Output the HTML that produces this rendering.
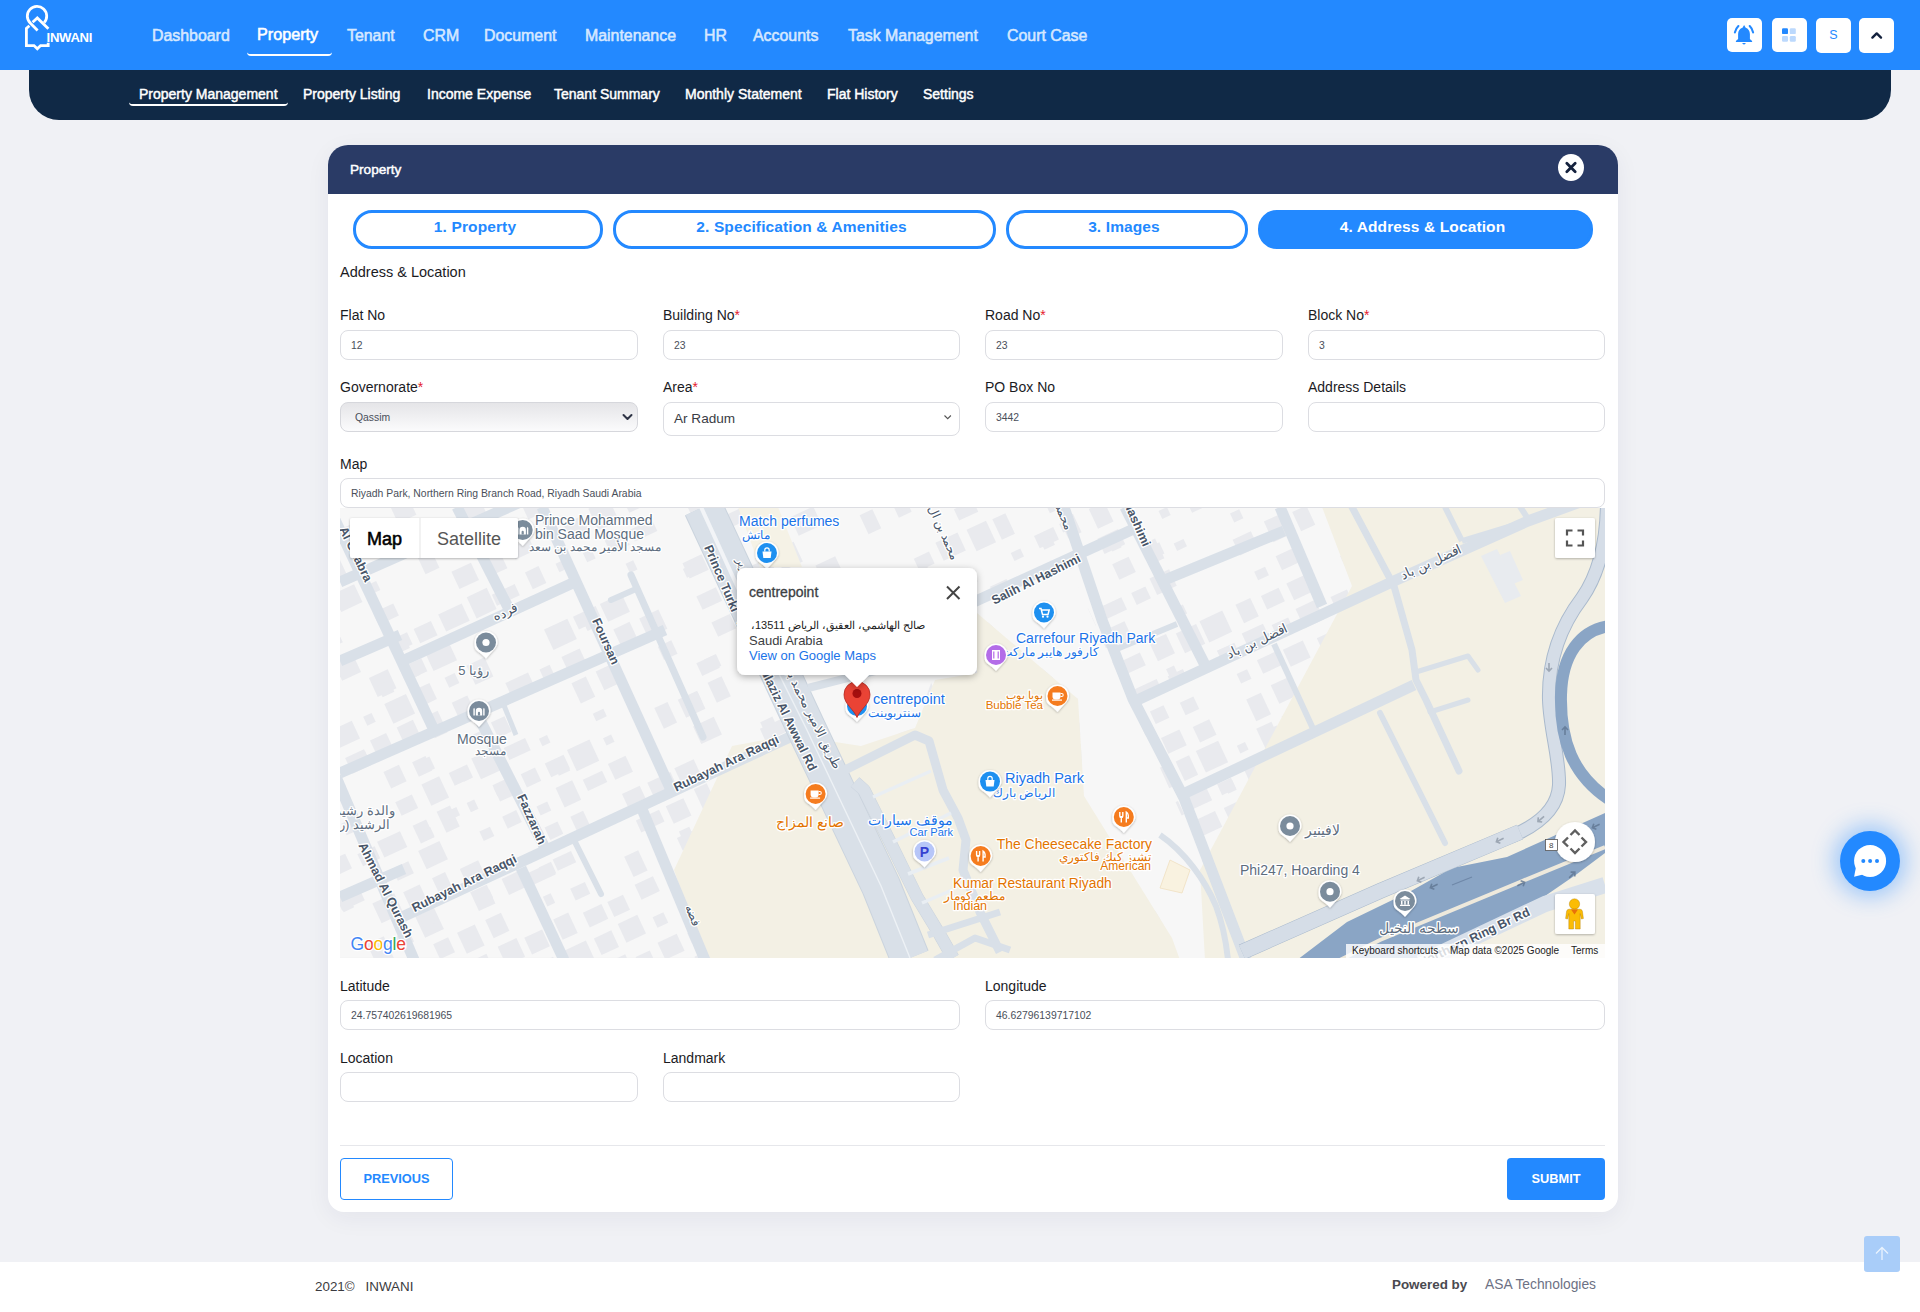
<!DOCTYPE html>
<html><head><meta charset="utf-8">
<style>
*{box-sizing:border-box;margin:0;padding:0}
html,body{width:1920px;height:1312px;overflow:hidden;background:#f0f1f5;font-family:"Liberation Sans",sans-serif;position:relative}
.abs{position:absolute}
#top{left:0;top:0;width:1920px;height:70px;background:#2389ff}
.nav{position:absolute;top:25.5px;font-size:15.9px;color:#d6e8ff;white-space:nowrap;line-height:19px;-webkit-text-stroke:0.55px #d6e8ff}
.nav.act{color:#fff;top:24.5px;font-size:16.2px;-webkit-text-stroke:0.55px #fff}
#sub{left:29px;top:70px;width:1862px;height:50px;background:#102946;border-radius:0 0 30px 30px}
.sn{position:absolute;top:85.5px;font-size:14px;color:#fff;white-space:nowrap;line-height:17px;-webkit-text-stroke:0.45px #fff}
.hbtn{position:absolute;background:#fff;border-radius:5px}
#modal{left:328px;top:145px;width:1290px;height:1067px;background:#fff;border-radius:20px 20px 16px 16px;box-shadow:0 6px 24px rgba(30,40,80,0.06)}
#mhead{left:328px;top:145px;width:1290px;height:49px;background:#2a3b66;border-radius:20px 20px 0 0}
.tab{position:absolute;top:210px;height:38.5px;border:3px solid #2389ff;border-radius:19px;color:#2389ff;font-size:15.5px;font-weight:bold;letter-spacing:0.12px;text-align:center;line-height:27px;padding-right:6px}
.tab.on{background:#2389ff;color:#fff}
.lbl{position:absolute;font-size:14px;color:#1b1b1f;white-space:nowrap;line-height:16px}
.req{color:#e5202e}
.inp{position:absolute;height:30px;border:1px solid #dcdde2;border-radius:8px;background:#fff;font-size:10.4px;color:#4a4f5a;padding-left:10px;line-height:30px;white-space:nowrap}
</style></head><body>
<div id="top" class="abs"></div>
<!-- logo -->
<svg class="abs" style="left:0;top:0" width="100" height="56" viewBox="0 0 100 56">
  <g fill="none" stroke="#fff" stroke-width="2.8" stroke-linecap="butt">
    <path d="M44.2 22.6 A9.7 9.7 0 1 0 30.2 23 L37.6 30.4"/>
    <path d="M32.6 22.2 L37.3 17.9 L48.4 28.8"/>
    <path d="M29.4 25.8 L26.4 28.4 L26.4 45.6 L34 45.6 L37.3 48.8 L40.6 45.6 L48.2 45.6 L48.2 42.8"/>
  </g>
  <text x="46.6" y="41.6" fill="#fff" font-family="Liberation Sans" font-weight="bold" font-size="13.1" letter-spacing="-0.3">INWANI</text>
</svg>
<div class="nav" style="left:152px">Dashboard</div>
<div class="nav act" style="left:257px">Property</div>
<div class="abs" style="left:247px;top:52px;width:85px;height:4px;border-bottom:2.4px solid #fff;border-radius:0 0 4px 4px"></div>
<div class="nav" style="left:347px">Tenant</div>
<div class="nav" style="left:423px">CRM</div>
<div class="nav" style="left:484px">Document</div>
<div class="nav" style="left:585px">Maintenance</div>
<div class="nav" style="left:704px">HR</div>
<div class="nav" style="left:753px">Accounts</div>
<div class="nav" style="left:848px">Task Management</div>
<div class="nav" style="left:1007px">Court Case</div>

<div class="hbtn" style="left:1727px;top:18px;width:35px;height:34px">
  <svg width="35" height="34" viewBox="0 0 35 34" style="position:absolute;left:0;top:0">
    <path d="M17.1 7 L15.5 9.8 C13 10.6 11.1 12.8 11.1 16 V21 L8.9 23 V24.1 H25.1 V23 L22.9 21 V16 C22.9 12.8 21 10.6 18.7 9.8 Z" fill="#2389ff"/>
    <path d="M14.9 24.9 H19.1 L17 26.8 Z" fill="#2389ff"/>
    <path d="M11.4 8 Q8.7 10.6 7.9 14.4M22.7 8 Q25.4 10.6 26.1 14.4" stroke="#2389ff" stroke-width="2.1" fill="none" stroke-linecap="round"/>
  </svg></div>
<div class="hbtn" style="left:1772px;top:18px;width:35px;height:34px">
  <svg width="35" height="34" viewBox="0 0 35 34" style="position:absolute;left:0;top:0">
    <rect x="10" y="10.3" width="6" height="5.8" rx="1.2" fill="#2389ff"/>
    <rect x="17.8" y="10.3" width="6" height="5.8" rx="1.2" fill="#bcd9fd"/>
    <rect x="10" y="18" width="6" height="5.8" rx="1.2" fill="#bcd9fd"/>
    <rect x="17.8" y="18" width="6" height="5.8" rx="1.2" fill="#bcd9fd"/>
  </svg></div>
<div class="hbtn" style="left:1816px;top:18px;width:35px;height:35px;color:#2389ff;font-size:12.5px;text-align:center;line-height:34px">S</div>
<div class="hbtn" style="left:1859px;top:18px;width:35px;height:35px">
  <svg width="35" height="35" viewBox="0 0 35 35" style="position:absolute;left:0;top:0">
    <path d="M13.4 19.6l4.3-4.2 4.3 4.2" stroke="#14213d" stroke-width="2.4" fill="none" stroke-linecap="round" stroke-linejoin="round"/>
  </svg></div>
<div id="sub" class="abs"></div>
<div class="sn" style="left:139px">Property Management</div>
<div class="abs" style="left:129px;top:102px;width:159px;height:4px;border-bottom:2.4px solid #fff;border-radius:0 0 4px 4px"></div>
<div class="sn" style="left:303px">Property Listing</div>
<div class="sn" style="left:427px">Income Expense</div>
<div class="sn" style="left:554px">Tenant Summary</div>
<div class="sn" style="left:685px">Monthly Statement</div>
<div class="sn" style="left:827px">Flat History</div>
<div class="sn" style="left:923px">Settings</div>

<div id="modal" class="abs"></div>
<div id="mhead" class="abs"></div>
<div class="abs" style="left:350px;top:162px;font-size:13.6px;color:#fff;line-height:16px;-webkit-text-stroke:0.45px #fff">Property</div>
<div class="abs" style="left:1558px;top:154px;width:26px;height:27px;border-radius:50%;background:#fff">
  <svg width="26" height="27" viewBox="0 0 26 27" style="position:absolute;left:0;top:0"><path d="M8.8 9.3l8.4 8.4M17.2 9.3l-8.4 8.4" stroke="#14213d" stroke-width="2.8" stroke-linecap="round"/></svg></div>

<div class="tab" style="left:353px;width:250px">1. Property</div>
<div class="tab" style="left:613px;width:383px">2. Specification &amp; Amenities</div>
<div class="tab" style="left:1006px;width:242px">3. Images</div>
<div class="tab on" style="left:1258px;width:335px">4. Address &amp; Location</div>

<div class="lbl" style="left:340px;top:264px;font-size:14.5px">Address &amp; Location</div>

<div class="lbl" style="left:340px;top:307px">Flat No</div>
<div class="lbl" style="left:663px;top:307px">Building No<span class="req">*</span></div>
<div class="lbl" style="left:985px;top:307px">Road No<span class="req">*</span></div>
<div class="lbl" style="left:1308px;top:307px">Block No<span class="req">*</span></div>
<div class="inp" style="left:340px;top:330px;width:298px">12</div>
<div class="inp" style="left:663px;top:330px;width:297px">23</div>
<div class="inp" style="left:985px;top:330px;width:298px">23</div>
<div class="inp" style="left:1308px;top:330px;width:297px">3</div>

<div class="lbl" style="left:340px;top:379px">Governorate<span class="req">*</span></div>
<div class="lbl" style="left:663px;top:379px">Area<span class="req">*</span></div>
<div class="lbl" style="left:985px;top:379px">PO Box No</div>
<div class="lbl" style="left:1308px;top:379px">Address Details</div>

<div class="abs" style="left:340px;top:402px;width:298px;height:30px;border:1px solid #d6d7dc;border-radius:8px;background:linear-gradient(#e5e5e8,#fbfbfc)"></div>
<div class="abs" style="left:355px;top:411px;font-size:10.4px;color:#4a4f5a;line-height:14px">Qassim</div>
<svg class="abs" style="left:620px;top:411px" width="15" height="12" viewBox="0 0 15 12"><path d="M3.5 4l4 4 4-4" stroke="#2e3445" stroke-width="2" fill="none" stroke-linecap="round" stroke-linejoin="round"/></svg>
<div class="abs" style="left:663px;top:402px;width:297px;height:34px;border:1px solid #dcdde2;border-radius:8px;background:#fff"></div>
<div class="abs" style="left:674px;top:410px;font-size:13.6px;color:#3a3d45;line-height:17px">Ar Radum</div>
<svg class="abs" style="left:941px;top:412px" width="14" height="10" viewBox="0 0 14 10"><path d="M3.5 3.5l3.2 3.2 3.2-3.2" stroke="#555" stroke-width="1.1" fill="none"/></svg>
<div class="inp" style="left:985px;top:402px;width:298px">3442</div>
<div class="inp" style="left:1308px;top:402px;width:297px"></div>

<div class="lbl" style="left:340px;top:456px">Map</div>
<div class="inp" style="left:340px;top:478px;width:1265px">Riyadh Park, Northern Ring Branch Road, Riyadh Saudi Arabia</div>

<div id="map" class="abs" style="left:340px;top:508px;width:1265px;height:450px;background:#f5f5f5;overflow:hidden">
<!--MAPSVG-->
<svg width="1265" height="450" viewBox="340 508 1265 450" style="position:absolute;left:0;top:0"><rect x="340" y="507" width="1265" height="450" fill="#f7f7f7"/>
<rect x="315.66821144470305" y="968.6444706312878" width="19.582694113871675" height="15.886015436929291" fill="#e9eaee" transform="rotate(-25 325.45955850163887 976.5874783497525)"/>
<rect x="325.44827455617826" y="975.8605736487144" width="9.446377699746725" height="9.528933070251867" fill="#e9eaee" transform="rotate(-25 330.1714634060516 980.6250401838404)"/>
<rect x="331.1862855270919" y="856.7850187638451" width="18.23947774603983" height="16.19103244430083" fill="#e9eaee" transform="rotate(-25 340.3060244001118 864.8805349859955)"/>
<rect x="337.6474101018988" y="890.2898781215542" width="24.902850513241695" height="15.951057834859629" fill="#e9eaee" transform="rotate(-25 350.09883535851964 898.2654070389841)"/>
<rect x="340.44051613816833" y="897.3768855293549" width="11.536769204482594" height="12.95365921525903" fill="#e9eaee" transform="rotate(-25 346.2089007404096 903.8537151369844)"/>
<rect x="371.19091367991" y="938.9458654956003" width="18.47888736865056" height="23.98499012670943" fill="#e9eaee" transform="rotate(-25 380.4303573642353 950.938360558955)"/>
<rect x="378.55323354798907" y="966.898292217886" width="25.354344505071147" height="15.165470990201182" fill="#e9eaee" transform="rotate(-25 391.23040580052464 974.4810277129866)"/>
<rect x="316.00434959514627" y="761.4820573300875" width="23.970587626133767" height="20.07645792194251" fill="#e9eaee" transform="rotate(-25 327.98964340821317 771.5202862910588)"/>
<rect x="343.03048801619855" y="819.2572891887518" width="18.186690808954886" height="12.8113277051634" fill="#e9eaee" transform="rotate(-25 352.12383342067596 825.6629530413335)"/>
<rect x="359.32993898137505" y="849.56504790621" width="19.0100312402991" height="13.339101057261292" fill="#e9eaee" transform="rotate(-25 368.8349546015246 856.2345984348407)"/>
<rect x="375.8528026112777" y="897.2632532590922" width="24.108455288234794" height="21.95052969118222" fill="#e9eaee" transform="rotate(-25 387.9070302553951 908.2385181046833)"/>
<rect x="394.393770213885" y="933.7151343220594" width="17.899311924661824" height="12.022829236540947" fill="#e9eaee" transform="rotate(-25 403.34342617621587 939.7265489403298)"/>
<rect x="334.3549047918573" y="724.509696172478" width="22.602231067508974" height="19.657884471981216" fill="#e9eaee" transform="rotate(-25 345.6560203256118 734.3386384084686)"/>
<rect x="347.8068092695079" y="752.8818573386969" width="20.821977829778902" height="17.274283460541355" fill="#e9eaee" transform="rotate(-25 358.21779818439734 761.5189990689676)"/>
<rect x="355.46612440711624" y="752.7047982688293" width="12.258346024397284" height="10.93590918717808" fill="#e9eaee" transform="rotate(-25 361.5952974193149 758.1727528624184)"/>
<rect x="379.53736149467596" y="835.7026361655253" width="25.285260234153263" height="17.364679232016552" fill="#e9eaee" transform="rotate(-25 392.1799916117526 844.3849757815335)"/>
<rect x="394.2099801233407" y="864.4639347084875" width="17.699370470528375" height="13.262796207317413" fill="#e9eaee" transform="rotate(-25 403.0596653586049 871.0953328121462)"/>
<rect x="406.1355091363259" y="887.5477821579717" width="18.17771322828905" height="18.001030261254222" fill="#e9eaee" transform="rotate(-25 415.2243657504704 896.5482972885989)"/>
<rect x="419.1785980377112" y="910.9031532557191" width="20.71286902600891" height="23.64167326986891" fill="#e9eaee" transform="rotate(-25 429.53503255071564 922.7239898906536)"/>
<rect x="421.52866649236324" y="915.0773258526067" width="12.454923260753342" height="10.959318784098942" fill="#e9eaee" transform="rotate(-25 427.75612812273994 920.5569852446562)"/>
<rect x="435.8669503095476" y="939.9688594111286" width="16.473816475768018" height="16.42671125157556" fill="#e9eaee" transform="rotate(-25 444.10385854743157 948.1822150369164)"/>
<rect x="312.41817032669144" y="606.5234689969301" width="15.367017605980834" height="14.671218500595806" fill="#e9eaee" transform="rotate(-25 320.1016791296819 613.859078247228)"/>
<rect x="316.4127220651331" y="629.5124092938169" width="23.5562679212132" height="18.55789745440545" fill="#e9eaee" transform="rotate(-25 328.1908560257397 638.7913580210196)"/>
<rect x="336.4877225201713" y="655.1839442705638" width="20.785569350539344" height="22.26537690083881" fill="#e9eaee" transform="rotate(-25 346.880507195441 666.3166327209832)"/>
<rect x="364.81236281631345" y="714.3989850755173" width="9.285274999818215" height="9.893402219192662" fill="#e9eaee" transform="rotate(-25 369.45500031622254 719.3456861851137)"/>
<rect x="373.24540720473965" y="735.8768119018541" width="17.769317227638957" height="19.188455119587942" fill="#e9eaee" transform="rotate(-25 382.1300658185591 745.471039461648)"/>
<rect x="386.48220431980974" y="767.5375195349171" width="17.07183538056253" height="18.120603474596955" fill="#e9eaee" transform="rotate(-25 395.018122010091 776.5978212722156)"/>
<rect x="397.58016487071404" y="797.6196164565829" width="18.26643621887032" height="15.043684971618717" fill="#e9eaee" transform="rotate(-25 406.7133829801492 805.1414589423922)"/>
<rect x="416.094359904447" y="821.7612635304362" width="14.854370616667753" height="19.57917305431276" fill="#e9eaee" transform="rotate(-25 423.5215452127809 831.5508500575926)"/>
<rect x="422.78633889749284" y="828.3752774447787" width="10.021502194570566" height="10.648569655262573" fill="#e9eaee" transform="rotate(-25 427.7970899947781 833.6995622724099)"/>
<rect x="421.3148086455263" y="844.981020249425" width="23.44188848935202" height="20.168594014057042" fill="#e9eaee" transform="rotate(-25 433.0357528902023 855.0653172564536)"/>
<rect x="435.51769596439993" y="874.1942137542416" width="14.377471861472902" height="19.679396299699572" fill="#e9eaee" transform="rotate(-25 442.7064318951364 884.0339119040914)"/>
<rect x="461.0279496644569" y="927.4981507125095" width="19.571390872020768" height="23.241671915035703" fill="#e9eaee" transform="rotate(-25 470.8136451004673 939.1189866700274)"/>
<rect x="469.7973781158097" y="957.5452851534284" width="21.482677312445006" height="18.110648323357363" fill="#e9eaee" transform="rotate(-25 480.5387167720322 966.600609315107)"/>
<rect x="323.16855511791044" y="562.6700978474325" width="21.30204165307167" height="18.322888146705264" fill="#e9eaee" transform="rotate(-25 333.8195759444463 571.8315419207852)"/>
<rect x="336.0224418667686" y="588.1641374876945" width="23.34390010447362" height="19.771922146855392" fill="#e9eaee" transform="rotate(-25 347.6943919190054 598.0500985611221)"/>
<rect x="372.33801332497467" y="672.6384279490176" width="20.733977602170064" height="20.86528958544998" fill="#e9eaee" transform="rotate(-25 382.7050021260597 683.0710727417426)"/>
<rect x="379.3440601393976" y="682.3227191414795" width="12.956312235929357" height="12.743578738058138" fill="#e9eaee" transform="rotate(-25 385.82221625736224 688.6945085105086)"/>
<rect x="387.7350539802284" y="697.9582262125659" width="23.892613310113124" height="21.676032540381108" fill="#e9eaee" transform="rotate(-25 399.68136063528493 708.7962424827565)"/>
<rect x="400.5280597017041" y="722.6113796717981" width="17.9051497412965" height="22.30605740035629" fill="#e9eaee" transform="rotate(-25 409.48063457235236 733.7644083719763)"/>
<rect x="414.8004878467446" y="758.3807859340884" width="14.73994202580707" height="15.932732617434937" fill="#e9eaee" transform="rotate(-25 422.17045885964814 766.3471522428059)"/>
<rect x="422.4056553234631" y="758.0866383016178" width="10.329517053009774" height="13.129436093680987" fill="#e9eaee" transform="rotate(-25 427.570413849968 764.6513563484583)"/>
<rect x="425.48368694064465" y="779.202944623108" width="19.52198912075044" height="23.485882003868717" fill="#e9eaee" transform="rotate(-25 435.24468150101984 790.9458856250424)"/>
<rect x="431.12634922428776" y="786.2496936987925" width="8.846669638418046" height="8.877857306431745" fill="#e9eaee" transform="rotate(-25 435.54968404349677 790.6886223520083)"/>
<rect x="440.85272786991476" y="807.5062782649101" width="14.708931124916502" height="23.22022800794068" fill="#e9eaee" transform="rotate(-25 448.207193432373 819.1163922688804)"/>
<rect x="446.869915221294" y="809.2204126048753" width="11.898157472159049" height="8.876368739666624" fill="#e9eaee" transform="rotate(-25 452.8189939573735 813.6585969747085)"/>
<rect x="462.08642877610185" y="863.9233536863015" width="20.24900563241823" height="15.368630384912008" fill="#e9eaee" transform="rotate(-25 472.21093159231094 871.6076688787575)"/>
<rect x="473.7258953268948" y="887.53566334535" width="18.215767669084507" height="20.656417549902255" fill="#e9eaee" transform="rotate(-25 482.833779161437 897.8638721203012)"/>
<rect x="478.1713383630942" y="891.3356569684406" width="13.563487422682183" height="9.800740178759012" fill="#e9eaee" transform="rotate(-25 484.9530820744353 896.2360270578201)"/>
<rect x="488.6145288748249" y="915.4256237806105" width="17.37120949289381" height="20.035712822544454" fill="#e9eaee" transform="rotate(-25 497.3001336212718 925.4434801918827)"/>
<rect x="501.0668754962648" y="941.4827437461629" width="20.684863122168245" height="20.6221185579269" fill="#e9eaee" transform="rotate(-25 511.40930705734894 951.7938030251263)"/>
<rect x="341.8997529444649" y="526.0817853200842" width="14.160712442463346" height="17.57664250778318" fill="#e9eaee" transform="rotate(-25 348.9801091656966 534.8701065739758)"/>
<rect x="346.44014606008204" y="525.2528336617515" width="13.292770486620565" height="9.350159828023862" fill="#e9eaee" transform="rotate(-25 353.08653130339235 529.9279135757635)"/>
<rect x="367.03381731352476" y="583.0519950634971" width="11.794307015349833" height="10.030239227731998" fill="#e9eaee" transform="rotate(-25 372.9309708211997 588.0671146773631)"/>
<rect x="374.83203470735515" y="607.52976910429" width="22.280061010582017" height="13.338346908648225" fill="#e9eaee" transform="rotate(-25 385.97206521264616 614.1989425586141)"/>
<rect x="392.403597327303" y="635.4424711238471" width="18.241285864039824" height="13.171858782497853" fill="#e9eaee" transform="rotate(-25 401.5242402593229 642.028400515096)"/>
<rect x="395.3967766521906" y="642.0395779225412" width="13.196648609670195" height="9.100133211726641" fill="#e9eaee" transform="rotate(-25 401.9951009570257 646.5896445284045)"/>
<rect x="401.19418420539677" y="662.8025930102907" width="24.29948810958696" height="14.24050249518769" fill="#e9eaee" transform="rotate(-25 413.34392826019024 669.9228442578845)"/>
<rect x="408.16788350928323" y="667.737027786707" width="10.692850921225688" height="9.81295298765143" fill="#e9eaee" transform="rotate(-25 413.5143089698961 672.6435042805327)"/>
<rect x="417.26814424233356" y="685.6572674909767" width="16.683438528509402" height="17.79623333529619" fill="#e9eaee" transform="rotate(-25 425.6098635065883 694.5553841586247)"/>
<rect x="429.155180339519" y="712.7212561587581" width="14.14240654235236" height="23.548068286340673" fill="#e9eaee" transform="rotate(-25 436.22638361069517 724.4952903019284)"/>
<rect x="432.1555168819453" y="725.8098508621885" width="9.240229171375153" height="8.383615706494735" fill="#e9eaee" transform="rotate(-25 436.7756314676329 730.0016587154358)"/>
<rect x="450.7899549338128" y="768.060995462052" width="20.133155792117144" height="14.092098235855781" fill="#e9eaee" transform="rotate(-25 460.85653282987136 775.1070445799799)"/>
<rect x="461.0121331055314" y="768.649044571015" width="9.399294264695143" height="11.585481931742436" fill="#e9eaee" transform="rotate(-25 465.711780237879 774.4417855368862)"/>
<rect x="468.3701939847643" y="800.8239721285169" width="8.354884350426362" height="10.194126023213615" fill="#e9eaee" transform="rotate(-25 472.54763615997746 805.9210351401236)"/>
<rect x="481.0466091803591" y="828.619221164867" width="11.637892090601992" height="10.428900764237902" fill="#e9eaee" transform="rotate(-25 486.8655552256601 833.8336715469859)"/>
<rect x="504.5196642613583" y="874.42813513658" width="17.394209353218077" height="17.608771720329404" fill="#e9eaee" transform="rotate(-25 513.2167689379673 883.2325209967447)"/>
<rect x="527.2419811779373" y="932.8030615958784" width="19.690942472979824" height="18.36603781953602" fill="#e9eaee" transform="rotate(-25 537.0874524144272 941.9860805056464)"/>
<rect x="540.8503811714951" y="959.5514113332019" width="17.756609117616804" height="22.19069120786987" fill="#e9eaee" transform="rotate(-25 549.7286857303035 970.6467569371368)"/>
<rect x="349.07391561395104" y="482.0733780421394" width="22.87867389069793" height="18.75708945190241" fill="#e9eaee" transform="rotate(-25 360.5132525593 491.4519227680906)"/>
<rect x="353.3589466640087" y="487.01802199911765" width="8.08653076992373" height="8.268676345792755" fill="#e9eaee" transform="rotate(-25 357.40221204897057 491.152360172014)"/>
<rect x="416.03931272981106" y="624.208168322562" width="19.058053957211484" height="15.787866977332188" fill="#e9eaee" transform="rotate(-25 425.5683397084168 632.1021018112281)"/>
<rect x="428.01627891879355" y="645.9281747740245" width="25.883712285088222" height="20.673092507333802" fill="#e9eaee" transform="rotate(-25 440.95813506133766 656.2647210276914)"/>
<rect x="446.41156186950786" y="674.8198378514077" width="11.143458835038958" height="11.106326799284684" fill="#e9eaee" transform="rotate(-25 451.9832912870273 680.37300125105)"/>
<rect x="454.9749167179981" y="698.1193885267135" width="17.2253160690534" height="19.295551653886253" fill="#e9eaee" transform="rotate(-25 463.5875747525248 707.7671643536565)"/>
<rect x="470.51029743769084" y="733.5273402118968" width="11.561311884055897" height="9.128586002666864" fill="#e9eaee" transform="rotate(-25 476.2909533797188 738.0916332132302)"/>
<rect x="474.99257488309485" y="752.3005683493661" width="24.19242751847344" height="23.034384659593147" fill="#e9eaee" transform="rotate(-25 487.08878864233156 763.8177606791627)"/>
<rect x="478.8200858863883" y="761.7328023735195" width="13.183766269791906" height="13.870446279044918" fill="#e9eaee" transform="rotate(-25 485.4119690212843 768.6680255130419)"/>
<rect x="495.4745191596295" y="780.8212318437419" width="16.99577804359092" height="18.028906791286463" fill="#e9eaee" transform="rotate(-25 503.97240818142495 789.8356852393852)"/>
<rect x="494.97088095245545" y="785.0469615493481" width="12.090129662860374" height="8.92756343586576" fill="#e9eaee" transform="rotate(-25 501.0159457838856 789.510743267281)"/>
<rect x="504.25748900329694" y="812.7549202609166" width="15.466873171831486" height="13.237838465397008" fill="#e9eaee" transform="rotate(-25 511.9909255892127 819.3738394936152)"/>
<rect x="530.1581724201525" y="867.1808069862655" width="23.840545690151323" height="12.977042687389595" fill="#e9eaee" transform="rotate(-25 542.0784452652282 873.6693283299602)"/>
<rect x="540.7888655678456" y="864.0627795543038" width="13.491640648717478" height="12.524878145884106" fill="#e9eaee" transform="rotate(-25 547.5346858922044 870.3252186272458)"/>
<rect x="544.721485052386" y="894.5204776288316" width="8.584017984589348" height="10.664285340771924" fill="#e9eaee" transform="rotate(-25 549.0134940446807 899.8526202992175)"/>
<rect x="557.1694705928014" y="914.9729888491659" width="16.543606256229914" height="22.455482482061953" fill="#e9eaee" transform="rotate(-25 565.4412737209163 926.2007300901969)"/>
<rect x="566.8938147047018" y="944.7878551892403" width="24.633174951659186" height="21.352195320151502" fill="#e9eaee" transform="rotate(-25 579.2104021805313 955.463952849316)"/>
<rect x="392.74046509826354" y="499.10423057789194" width="20.189221550514425" height="20.933396109802914" fill="#e9eaee" transform="rotate(-25 402.83507587352074 509.5709286327934)"/>
<rect x="420.8568244049171" y="553.0929627105099" width="15.357074740264112" height="18.844745562919684" fill="#e9eaee" transform="rotate(-25 428.5353617750492 562.5153354919698)"/>
<rect x="440.9526990563157" y="608.0521115560401" width="25.955194516016327" height="18.969014487137308" fill="#e9eaee" transform="rotate(-25 453.93029631432387 617.5366187996087)"/>
<rect x="469.99892437638766" y="660.4405289317224" width="19.8421570956258" height="21.2169414732694" fill="#e9eaee" transform="rotate(-25 479.92000292420056 671.048999668357)"/>
<rect x="493.8497442478798" y="718.495896400604" width="14.889210606990666" height="17.027194862628306" fill="#e9eaee" transform="rotate(-25 501.29434955137515 727.0094938319181)"/>
<rect x="505.45617157052396" y="742.3522629484804" width="23.543510577725925" height="13.402135995241832" fill="#e9eaee" transform="rotate(-25 517.2279268593869 749.0533309461014)"/>
<rect x="523.0955796423386" y="770.1869300694462" width="15.745054141618292" height="14.634827244875686" fill="#e9eaee" transform="rotate(-25 530.9681067131478 777.5043436918841)"/>
<rect x="537.9872080124206" y="803.6593950648063" width="11.812653046297168" height="9.707417748441244" fill="#e9eaee" transform="rotate(-25 543.8935345355692 808.5131039390269)"/>
<rect x="546.7905186775351" y="823.9414152770598" width="14.27359284004703" height="13.586060637233079" fill="#e9eaee" transform="rotate(-25 553.9273150975587 830.7344455956763)"/>
<rect x="554.2605665560413" y="854.7469307897576" width="20.303583345386013" height="12.365602569580792" fill="#e9eaee" transform="rotate(-25 564.4123582287343 860.9297320745479)"/>
<rect x="562.2554473889414" y="854.3513482737858" width="8.553396027348702" height="10.87149924250999" fill="#e9eaee" transform="rotate(-25 566.5321454026158 859.7870978950408)"/>
<rect x="572.1871796957341" y="884.8221197452101" width="16.162461287833843" height="12.896410845763446" fill="#e9eaee" transform="rotate(-25 580.268410339651 891.2703251680919)"/>
<rect x="585.344742716758" y="907.6139503353326" width="20.474962936239503" height="16.295422101015014" fill="#e9eaee" transform="rotate(-25 595.5822241848778 915.7616613858401)"/>
<rect x="596.8223658074921" y="933.4901670343951" width="19.23981827194428" height="18.32006492189017" fill="#e9eaee" transform="rotate(-25 606.4422749434643 942.6501994953402)"/>
<rect x="604.1194336508761" y="959.0113683776566" width="25.842373738186787" height="16.789776726217763" fill="#e9eaee" transform="rotate(-25 617.0406205199695 967.4062567407655)"/>
<rect x="424.3231822781055" y="492.2612162981582" width="8.5217255083919" height="9.142587844551825" fill="#e9eaee" transform="rotate(-25 428.58404503230145 496.83251022043413)"/>
<rect x="454.4333839744067" y="566.3082691134701" width="21.53830100294873" height="19.139793450730636" fill="#e9eaee" transform="rotate(-25 465.20253447588107 575.8781658388355)"/>
<rect x="470.65253354602925" y="591.4308996187536" width="22.023056949368737" height="23.389855921687623" fill="#e9eaee" transform="rotate(-25 481.66406202071363 603.1258275795974)"/>
<rect x="475.2565502406101" y="593.5061065122128" width="12.48274866539482" height="10.588960544354522" fill="#e9eaee" transform="rotate(-25 481.49792457330756 598.80058678439)"/>
<rect x="506.84269544767005" y="677.1950561284084" width="25.058260709770167" height="12.764355230702682" fill="#e9eaee" transform="rotate(-25 519.3718258025551 683.5772337437597)"/>
<rect x="540.2536759854531" y="736.5129334110696" width="8.889627908221382" height="8.3152414430979" fill="#e9eaee" transform="rotate(-25 544.6984899395638 740.6705541326186)"/>
<rect x="547.0145449878222" y="758.3247341445413" width="20.708684782305408" height="15.179551403276168" fill="#e9eaee" transform="rotate(-25 557.3688873789749 765.9145098461794)"/>
<rect x="555.6382678294609" y="760.8830879421166" width="12.489086572269624" height="12.901610086099872" fill="#e9eaee" transform="rotate(-25 561.8828111155957 767.3338929851666)"/>
<rect x="559.2365280728837" y="783.2083312125768" width="18.28928256059191" height="21.34303567365879" fill="#e9eaee" transform="rotate(-25 568.3811693531796 793.8798490494062)"/>
<rect x="573.9176559338555" y="812.7236373658585" width="14.094491378135778" height="20.222237015559056" fill="#e9eaee" transform="rotate(-25 580.9649016229233 822.8347558736381)"/>
<rect x="610.005630267253" y="897.6263515928981" width="17.291241555018456" height="16.532629846682294" fill="#e9eaee" transform="rotate(-25 618.6512510447621 905.8926665162393)"/>
<rect x="621.0829657705202" y="918.4374114762513" width="21.570575674640004" height="20.61103131596886" fill="#e9eaee" transform="rotate(-25 631.8682536078402 928.7429271342357)"/>
<rect x="637.4890335978519" y="953.2173605755472" width="15.551161701459993" height="12.219849072385923" fill="#e9eaee" transform="rotate(-25 645.2646144485818 959.3272851117401)"/>
<rect x="459.1178828051953" y="496.1467100062111" width="23.6261306557966" height="23.6503335857406" fill="#e9eaee" transform="rotate(-25 470.9309481330936 507.9718767990814)"/>
<rect x="490.1132098697075" y="553.6527022195331" width="14.084172488071495" height="18.322550682132935" fill="#e9eaee" transform="rotate(-25 497.15529611374325 562.8139775605996)"/>
<rect x="493.22982956886335" y="588.8351352179448" width="25.183799799375652" height="12.188769999709084" fill="#e9eaee" transform="rotate(-25 505.82172946855115 594.9295202177993)"/>
<rect x="541.0801376360058" y="666.7767570235071" width="11.215532017479422" height="9.977555910160222" fill="#e9eaee" transform="rotate(-25 546.6879036447456 671.7655349785872)"/>
<rect x="570.7282694336246" y="743.7352226672299" width="24.7904368962573" height="23.282096810080432" fill="#e9eaee" transform="rotate(-25 583.1234878817532 755.3762710722701)"/>
<rect x="584.3870707713064" y="774.5957526898287" width="21.25600271557621" height="12.405131020154672" fill="#e9eaee" transform="rotate(-25 595.0150721290945 780.798318199906)"/>
<rect x="628.1977943719736" y="852.5659548622884" width="15.415059643512663" height="22.256735313956334" fill="#e9eaee" transform="rotate(-25 635.9053241937299 863.6943225192666)"/>
<rect x="637.152686615062" y="879.7815483262341" width="20.174033430941037" height="16.36841661819551" fill="#e9eaee" transform="rotate(-25 647.2397033305325 887.9657566353318)"/>
<rect x="654.4657772057184" y="914.1559455562351" width="11.905386826979289" height="11.633511271103188" fill="#e9eaee" transform="rotate(-25 660.418470619208 919.9727011917867)"/>
<rect x="660.4588993188825" y="937.355798538456" width="21.168587842343648" height="18.756701378538665" fill="#e9eaee" transform="rotate(-25 671.0431932400543 946.7341492277254)"/>
<rect x="672.4611721500517" y="964.1413668562777" width="23.388832763951033" height="17.923079751634482" fill="#e9eaee" transform="rotate(-25 684.1555885320272 973.102906732095)"/>
<rect x="511.93875337882884" y="542.9085326374214" width="21.172999447847054" height="12.590980318498588" fill="#e9eaee" transform="rotate(-25 522.5252531027523 549.2040227966708)"/>
<rect x="528.195918735702" y="568.3811500256787" width="14.92904522551918" height="18.652992625090775" fill="#e9eaee" transform="rotate(-25 535.6604413484615 577.7076463382241)"/>
<rect x="547.5168137412942" y="623.1071237057165" width="25.787339994467814" height="22.4714820930903" fill="#e9eaee" transform="rotate(-25 560.4104837385281 634.3428647522617)"/>
<rect x="555.4975018462001" y="628.9318808415998" width="10.702574932808943" height="12.907159504132832" fill="#e9eaee" transform="rotate(-25 560.8487893126045 635.3854605936662)"/>
<rect x="564.4078902489002" y="651.8209926692699" width="20.05821279157942" height="18.522039831029765" fill="#e9eaee" transform="rotate(-25 574.4369966446899 661.0820125847848)"/>
<rect x="575.3981501679573" y="678.8548523011401" width="15.907547720398107" height="22.259105723306686" fill="#e9eaee" transform="rotate(-25 583.3519240281563 689.9844051627935)"/>
<rect x="593.9573647639319" y="710.8317418456886" width="11.656580734022633" height="8.223601343515478" fill="#e9eaee" transform="rotate(-25 599.7856551309432 714.9435425174463)"/>
<rect x="604.3502516166454" y="735.9757647942438" width="8.877988867647389" height="8.1132147342046" fill="#e9eaee" transform="rotate(-25 608.7892460504692 740.0323721613461)"/>
<rect x="610.6918860318372" y="758.9914557445165" width="19.4641623503277" height="17.57477639672058" fill="#e9eaee" transform="rotate(-25 620.423967207001 767.7788439428768)"/>
<rect x="616.4885678579401" y="760.6508133549244" width="8.548542089245654" height="8.340148493857129" fill="#e9eaee" transform="rotate(-25 620.762838902563 764.820887601853)"/>
<rect x="623.9751385184054" y="789.1805426010476" width="19.562316042801694" height="13.96334374981988" fill="#e9eaee" transform="rotate(-25 633.7562965398063 796.1622144759575)"/>
<rect x="637.390409693192" y="814.589055688606" width="25.582208748518543" height="13.009314370775222" fill="#e9eaee" transform="rotate(-25 650.1815140674513 821.0937128739936)"/>
<rect x="679.5940590571149" y="894.3724447798827" width="20.141029520869466" height="22.18432189220306" fill="#e9eaee" transform="rotate(-25 689.6645738175497 905.4646057259843)"/>
<rect x="688.9360139186236" y="918.2586818869042" width="15.686789745569834" height="23.152338639138506" fill="#e9eaee" transform="rotate(-25 696.7794087914085 929.8348512064734)"/>
<rect x="688.9355957046592" y="930.2276768487094" width="12.145840633701686" height="10.603498720438752" fill="#e9eaee" transform="rotate(-25 695.0085160215101 935.5294262089287)"/>
<rect x="696.79886115954" y="950.6951419873577" width="25.382260007549856" height="17.04884602919101" fill="#e9eaee" transform="rotate(-25 709.4899911633149 959.2195650019532)"/>
<rect x="524.4828137092925" y="501.80952134614574" width="22.07094569395213" height="13.563907777523399" fill="#e9eaee" transform="rotate(-25 535.5182865562685 508.5914752349074)"/>
<rect x="557.0621796761296" y="561.4891021525777" width="8.473862588806526" height="9.342223497424772" fill="#e9eaee" transform="rotate(-25 561.2991109705329 566.1602139012901)"/>
<rect x="574.7784668280135" y="610.7258823338959" width="24.989187472121216" height="14.093927992456262" fill="#e9eaee" transform="rotate(-25 587.2730605640741 617.772846330124)"/>
<rect x="584.5866516936154" y="617.6423665303078" width="8.15193048273401" height="12.146971564899479" fill="#e9eaee" transform="rotate(-25 588.6626169349825 623.7158523127575)"/>
<rect x="598.9001295418966" y="665.6531464575636" width="23.064702264567032" height="20.573599529073547" fill="#e9eaee" transform="rotate(-25 610.4324806741802 675.9399462221004)"/>
<rect x="650.1079431061283" y="776.4291787377065" width="25.472427444890442" height="18.988152809696807" fill="#e9eaee" transform="rotate(-25 662.8441568285735 785.9232551425549)"/>
<rect x="668.8294320730733" y="801.3622412165965" width="19.498743176138724" height="19.04630392150316" fill="#e9eaee" transform="rotate(-25 678.5788036611427 810.8853931773481)"/>
<rect x="678.8838519289837" y="833.0272198661726" width="20.249859111730967" height="13.740799963087241" fill="#e9eaee" transform="rotate(-25 689.0087814848492 839.8976198477162)"/>
<rect x="680.7892412438529" y="828.6074106302308" width="11.418785758503358" height="11.72109698440537" fill="#e9eaee" transform="rotate(-25 686.4986341231046 834.4679591224335)"/>
<rect x="690.2185280373957" y="860.0766323188393" width="22.200124758650666" height="13.02407459678123" fill="#e9eaee" transform="rotate(-25 701.318590416721 866.5886696172299)"/>
<rect x="689.0232708238811" y="858.1007388449622" width="13.098991961417607" height="8.813079570589485" fill="#e9eaee" transform="rotate(-25 695.57276680459 862.5072786302569)"/>
<rect x="742.5687069245905" y="960.5165124787119" width="20.28274716775841" height="22.145038811223596" fill="#e9eaee" transform="rotate(-25 752.7100805084697 971.5890318843237)"/>
<rect x="751.62502071764" y="968.4130219110419" width="11.558111951202694" height="10.441902339782027" fill="#e9eaee" transform="rotate(-25 757.4040766932413 973.633973080933)"/>
<rect x="565.6579964962301" y="519.4538245193274" width="20.50784171629283" height="15.236235826679696" fill="#e9eaee" transform="rotate(-25 575.9119173543766 527.0719424326672)"/>
<rect x="584.5958242760358" y="550.6441257815275" width="9.364425873788033" height="10.204066636797004" fill="#e9eaee" transform="rotate(-25 589.2780372129298 555.746159099926)"/>
<rect x="602.8841614124898" y="597.9578467483259" width="23.98130115680592" height="19.682660458725366" fill="#e9eaee" transform="rotate(-25 614.8748119908928 607.7991769776886)"/>
<rect x="617.569735993247" y="624.489563421442" width="17.8449859055038" height="23.90193928819822" fill="#e9eaee" transform="rotate(-25 626.4922289459989 636.4405330655411)"/>
<rect x="658.4195988194415" y="703.9573220996367" width="14.54808262305852" height="22.669201094467805" fill="#e9eaee" transform="rotate(-25 665.6936401309707 715.2919226468706)"/>
<rect x="676.7805122974358" y="763.0058537664695" width="21.295748944645624" height="16.249574866581586" fill="#e9eaee" transform="rotate(-25 687.4283867697586 771.1306411997602)"/>
<rect x="697.8191543306481" y="785.1424723146806" width="14.156840692023808" height="22.024653328379138" fill="#e9eaee" transform="rotate(-25 704.8975746766599 796.1547989788702)"/>
<rect x="707.1275711357699" y="811.0556861286668" width="14.007252289020565" height="22.748981752184136" fill="#e9eaee" transform="rotate(-25 714.1311972802802 822.4301770047589)"/>
<rect x="706.2724048775971" y="817.4420005432893" width="11.439866565883236" height="9.333805087672948" fill="#e9eaee" transform="rotate(-25 711.9923381605387 822.1089030871258)"/>
<rect x="729.533336769991" y="871.8573617201295" width="17.475601097886898" height="14.558694526469688" fill="#e9eaee" transform="rotate(-25 738.2711373189345 879.1367089833643)"/>
<rect x="735.7233709237238" y="869.9998520658127" width="12.468955284488414" height="12.882950432644012" fill="#e9eaee" transform="rotate(-25 741.957848565968 876.4413272821347)"/>
<rect x="748.3812213145426" y="897.8064734295392" width="11.404687299239626" height="10.529040394347664" fill="#e9eaee" transform="rotate(-25 754.0835649641624 903.0709936267131)"/>
<rect x="769.0128543076991" y="952.7698804384557" width="19.65717243531174" height="14.24636649234358" fill="#e9eaee" transform="rotate(-25 778.841440525355 959.8930636846276)"/>
<rect x="592.3702250503909" y="502.7627898200491" width="22.640982167457178" height="23.894053014256826" fill="#e9eaee" transform="rotate(-25 603.6907161341195 514.7098163271775)"/>
<rect x="606.2479055524358" y="533.0273332940749" width="20.97039749305691" height="17.044145505617465" fill="#e9eaee" transform="rotate(-25 616.7331042989642 541.5494060468836)"/>
<rect x="627.3392137042116" y="561.4596951992798" width="8.412515483070917" height="10.261925091639" fill="#e9eaee" transform="rotate(-25 631.545471445747 566.5906577450993)"/>
<rect x="642.7154783797263" y="612.9676956355092" width="21.14652683103045" height="21.302333839844003" fill="#e9eaee" transform="rotate(-25 653.2887417952415 623.6188625554313)"/>
<rect x="652.6385954970233" y="618.9800032068313" width="9.465037911096774" height="9.843541882483882" fill="#e9eaee" transform="rotate(-25 657.3711144525716 623.9017741480732)"/>
<rect x="660.2461034120344" y="642.8089918619561" width="14.8421020665009" height="14.775301680573406" fill="#e9eaee" transform="rotate(-25 667.6671544452848 650.1966427022428)"/>
<rect x="680.9685706788584" y="694.3409488883989" width="21.312345525353315" height="19.76712175910977" fill="#e9eaee" transform="rotate(-25 691.6247434415351 704.2245097679538)"/>
<rect x="686.7063918748285" y="694.2452962149409" width="13.831274861996166" height="11.286964811022461" fill="#e9eaee" transform="rotate(-25 693.6220293058266 699.8887786204522)"/>
<rect x="696.124314616523" y="720.7509804055177" width="22.78791024183831" height="19.374515610564156" fill="#e9eaee" transform="rotate(-25 707.5182697374421 730.4382382107998)"/>
<rect x="743.9426283861505" y="831.196576915547" width="19.876151184029915" height="13.733397181712677" fill="#e9eaee" transform="rotate(-25 753.8807039781655 838.0632755064033)"/>
<rect x="750.8309049438674" y="827.0635119745154" width="11.671800876248836" height="10.447388097040736" fill="#e9eaee" transform="rotate(-25 756.6668053819918 832.2872060230358)"/>
<rect x="760.4407485235574" y="858.5986263710639" width="16.55533017003055" height="12.18916852193324" fill="#e9eaee" transform="rotate(-25 768.7184136085727 864.6932106320305)"/>
<rect x="783.4724083988117" y="910.216841175512" width="18.940691662107085" height="22.503904017116696" fill="#e9eaee" transform="rotate(-25 792.9427542298653 921.4687931840703)"/>
<rect x="801.6894387774075" y="942.7732441565701" width="14.629663696215584" height="13.561886823180638" fill="#e9eaee" transform="rotate(-25 809.0042706255153 949.5541875681604)"/>
<rect x="624.8848908603422" y="493.0330454692238" width="16.676588770851374" height="17.115788830067487" fill="#e9eaee" transform="rotate(-25 633.2231852457679 501.5909398842575)"/>
<rect x="630.9210712583733" y="524.213173415601" width="24.864106834496305" height="12.683044187216723" fill="#e9eaee" transform="rotate(-25 643.3531246756215 530.5546955092093)"/>
<rect x="698.3985097433131" y="658.6150656519579" width="19.376335913255836" height="14.008758846339" fill="#e9eaee" transform="rotate(-25 708.086677699941 665.6194450751275)"/>
<rect x="705.8954467233282" y="656.3469613379928" width="13.377665497757505" height="12.817552361147271" fill="#e9eaee" transform="rotate(-25 712.584279472207 662.7557375185664)"/>
<rect x="711.4780012440068" y="678.4989886200703" width="15.41495963324271" height="21.937625299382262" fill="#e9eaee" transform="rotate(-25 719.1854810606281 689.4678012697615)"/>
<rect x="751.889627642343" y="765.354625449061" width="15.284848690513387" height="14.1948651464419" fill="#e9eaee" transform="rotate(-25 759.5320519875997 772.452058022282)"/>
<rect x="750.8914599314966" y="768.6562022846992" width="9.887652066265279" height="9.293102349861636" fill="#e9eaee" transform="rotate(-25 755.8352859646292 773.30275345963)"/>
<rect x="764.6804451421466" y="788.4995907586263" width="14.112940992137943" height="18.619792689729785" fill="#e9eaee" transform="rotate(-25 771.7369156382156 797.8094871034912)"/>
<rect x="767.0166203062506" y="786.2602799843146" width="10.816025197177588" height="11.713007420974023" fill="#e9eaee" transform="rotate(-25 772.4246329048394 792.1167836948016)"/>
<rect x="800.8021096955799" y="868.4144491642039" width="18.96563030096685" height="21.438058562648074" fill="#e9eaee" transform="rotate(-25 810.2849248460634 879.133478445528)"/>
<rect x="801.3693441877989" y="871.5735588609704" width="11.266196602175523" height="13.945184135343158" fill="#e9eaee" transform="rotate(-25 807.0024424888867 878.546150928642)"/>
<rect x="806.322994180159" y="899.3809896307004" width="24.521840575299024" height="13.150004694432102" fill="#e9eaee" transform="rotate(-25 818.5839144678084 905.9559919779164)"/>
<rect x="824.1704435007224" y="925.303112954244" width="21.287585888288156" height="23.429959071790144" fill="#e9eaee" transform="rotate(-25 834.8142364448664 937.0180924901391)"/>
<rect x="685.0649146023734" y="557.9645946056689" width="20.98157599894332" height="16.99291559628941" fill="#e9eaee" transform="rotate(-25 695.555702601845 566.4610524038136)"/>
<rect x="684.3661572533438" y="565.951076882932" width="12.002470730832615" height="9.792990621341996" fill="#e9eaee" transform="rotate(-25 690.36739261876 570.847572193603)"/>
<rect x="698.4666566320888" y="591.1804174451597" width="21.54869936006092" height="14.796746377985219" fill="#e9eaee" transform="rotate(-25 709.2410063121192 598.5787906341524)"/>
<rect x="713.8624855993017" y="617.4124793624052" width="20.09046002024273" height="15.857732390287495" fill="#e9eaee" transform="rotate(-25 723.9077156094231 625.341345557549)"/>
<rect x="761.7777201656723" y="723.5108759303747" width="22.286318272002806" height="13.968851585658943" fill="#e9eaee" transform="rotate(-25 772.9208793016737 730.4953017232042)"/>
<rect x="762.520005349689" y="718.7837666512771" width="13.44999092640979" height="13.98548198548748" fill="#e9eaee" transform="rotate(-25 769.2450008128939 725.7765076440209)"/>
<rect x="790.3112973968182" y="778.5568467432914" width="15.53232798250092" height="14.903808382291029" fill="#e9eaee" transform="rotate(-25 798.0774613880686 786.008750934437)"/>
<rect x="791.6372586455799" y="783.206072471927" width="9.449533618850403" height="9.426066983954277" fill="#e9eaee" transform="rotate(-25 796.3620254550051 787.9191059639041)"/>
<rect x="811.3065662213296" y="827.9769987623184" width="24.007249335459647" height="21.67597899400809" fill="#e9eaee" transform="rotate(-25 823.3101908890594 838.8149882593225)"/>
<rect x="819.0666319475993" y="835.1540403591267" width="8.066285856452762" height="9.461520198168165" fill="#e9eaee" transform="rotate(-25 823.0997748758257 839.8848004582109)"/>
<rect x="826.5547633761277" y="859.4972752253225" width="20.85247729881233" height="18.33208527345705" fill="#e9eaee" transform="rotate(-25 836.9810020255338 868.663317862051)"/>
<rect x="825.6859605653602" y="866.2627126639267" width="12.635367794391563" height="10.609329529861835" fill="#e9eaee" transform="rotate(-25 832.003644462556 871.5673774288575)"/>
<rect x="850.8080735681604" y="915.7896099185939" width="25.30373410686949" height="17.4272386671826" fill="#e9eaee" transform="rotate(-25 863.4599406215951 924.5032292521852)"/>
<rect x="869.3731833506749" y="941.6896133959274" width="8.3566276654587" height="10.9269683459293" fill="#e9eaee" transform="rotate(-25 873.5514971834043 947.153097568892)"/>
<rect x="872.9110826635164" y="967.0192825361486" width="23.716121168289476" height="19.689148517636593" fill="#e9eaee" transform="rotate(-25 884.7691432476611 976.8638567949669)"/>
<rect x="881.2563222521835" y="967.2747209708837" width="12.812114515871517" height="11.626577039779264" fill="#e9eaee" transform="rotate(-25 887.6623795101193 973.0880094907733)"/>
<rect x="688.5364409133729" y="494.50901382836224" width="16.724725011151257" height="15.632662327608012" fill="#e9eaee" transform="rotate(-25 696.8988034189485 502.32534499216627)"/>
<rect x="688.0286126327618" y="501.1294342582474" width="10.27384933677406" height="11.363605754618725" fill="#e9eaee" transform="rotate(-25 693.1655373011488 506.8112371355567)"/>
<rect x="699.7185091798569" y="518.009829157956" width="25.435110377145783" height="23.181375648448707" fill="#e9eaee" transform="rotate(-25 712.4360643684298 529.6005169821804)"/>
<rect x="718.8181562914465" y="554.0831033982158" width="8.124985844091398" height="9.510090280737057" fill="#e9eaee" transform="rotate(-25 722.8806492134922 558.8381485385844)"/>
<rect x="749.3943626326841" y="634.2660784502465" width="23.583947671810073" height="13.054398279571771" fill="#e9eaee" transform="rotate(-25 761.1863364685892 640.7932775900324)"/>
<rect x="766.7031244578781" y="658.7405423778672" width="11.150183899135296" height="8.894077332329868" fill="#e9eaee" transform="rotate(-25 772.2782164074457 663.1875810440322)"/>
<rect x="778.5532951825015" y="686.8343690216717" width="14.221502070414607" height="15.680088779356232" fill="#e9eaee" transform="rotate(-25 785.6640462177088 694.6744134113499)"/>
<rect x="784.9700975293376" y="708.3108832363042" width="24.63740774942552" height="21.71180779784534" fill="#e9eaee" transform="rotate(-25 797.2888014040504 719.1667871352269)"/>
<rect x="802.1935527416812" y="734.1401979861753" width="18.463512813600374" height="19.6087685300972" fill="#e9eaee" transform="rotate(-25 811.4253091484813 743.9445822512239)"/>
<rect x="801.3818991762191" y="744.0199978285552" width="9.116095749368126" height="8.328176505989372" fill="#e9eaee" transform="rotate(-25 805.9399470509031 748.1840860815499)"/>
<rect x="810.6049311664353" y="762.9463267208488" width="20.94617893739174" height="19.877502258765468" fill="#e9eaee" transform="rotate(-25 821.0780206351312 772.8850778502315)"/>
<rect x="815.5223540663357" y="766.5473249774695" width="11.479012731785112" height="8.654819752208796" fill="#e9eaee" transform="rotate(-25 821.2618604322282 770.874734853574)"/>
<rect x="838.6455971311703" y="821.9477587301394" width="19.33389422343564" height="15.174209200386638" fill="#e9eaee" transform="rotate(-25 848.3125442428882 829.5348633303328)"/>
<rect x="866.265922097261" y="874.2141802455685" width="17.458298762191568" height="18.097383267900888" fill="#e9eaee" transform="rotate(-25 874.9950714783567 883.2628718795189)"/>
<rect x="875.4160623191219" y="904.9481340709688" width="21.171975712228036" height="15.186644349617213" fill="#e9eaee" transform="rotate(-25 886.0020501752359 912.5414562457773)"/>
<rect x="892.939591809202" y="929.6473316324914" width="14.055614517919524" height="13.177116759371872" fill="#e9eaee" transform="rotate(-25 899.9673990681619 936.2358900121774)"/>
<rect x="720.1851058941612" y="483.02434793799875" width="8.331221106157038" height="8.568020937436161" fill="#e9eaee" transform="rotate(-25 724.3507164472397 487.3083584067168)"/>
<rect x="726.2185655116393" y="511.427880629489" width="17.344673034674646" height="13.446302617945289" fill="#e9eaee" transform="rotate(-25 734.8909020289766 518.1510319384616)"/>
<rect x="750.8601812868894" y="561.583996768408" width="23.82320681335179" height="20.22769267083511" fill="#e9eaee" transform="rotate(-25 762.7717846935653 571.6978431038256)"/>
<rect x="759.7742393320194" y="562.8361224258392" width="10.885992049634485" height="9.100728545258763" fill="#e9eaee" transform="rotate(-25 765.2172353568367 567.3864866984686)"/>
<rect x="773.6295158204282" y="614.2080851045417" width="24.973393286417362" height="18.62380161449095" fill="#e9eaee" transform="rotate(-25 786.1162124636369 623.5199859117872)"/>
<rect x="852.730703437755" y="779.6688544936854" width="18.814131447823936" height="19.848625658219305" fill="#e9eaee" transform="rotate(-25 862.1377691616669 789.5931673227951)"/>
<rect x="886.4763504870692" y="838.9302565416243" width="10.585875002952623" height="11.553276837907314" fill="#e9eaee" transform="rotate(-25 891.7692879885456 844.706894960578)"/>
<rect x="896.8376393467948" y="860.0086622715817" width="14.287832059596603" height="20.602182318343136" fill="#e9eaee" transform="rotate(-25 903.9815553765932 870.3097534307533)"/>
<rect x="901.5818849415793" y="885.572366091158" width="24.095156077077963" height="21.065827155003564" fill="#e9eaee" transform="rotate(-25 913.6294629801183 896.1052796686597)"/>
<rect x="903.8126363562561" y="887.8460719188402" width="12.472633978008881" height="9.5050455417189" fill="#e9eaee" transform="rotate(-25 910.0489533452605 892.5985946896996)"/>
<rect x="920.0560555999675" y="916.275205215563" width="18.98464722315252" height="13.678027189971914" fill="#e9eaee" transform="rotate(-25 929.5483792115438 923.114218810549)"/>
<rect x="930.3027372907885" y="945.1945650326265" width="14.460972210034994" height="14.662398986029261" fill="#e9eaee" transform="rotate(-25 937.533223395806 952.5257645256412)"/>
<rect x="752.3526452100363" y="497.7126240339743" width="23.539209514830162" height="14.548168072652029" fill="#e9eaee" transform="rotate(-25 764.1222499674514 504.9867080703003)"/>
<rect x="777.4263399461877" y="545.3040503688308" width="21.82728029348161" height="21.870064895070918" fill="#e9eaee" transform="rotate(-25 788.3399800929285 556.2390828163662)"/>
<rect x="809.4958354173042" y="605.0644741957597" width="15.937632291709352" height="14.834290230567378" fill="#e9eaee" transform="rotate(-25 817.4646515631589 612.4816193110433)"/>
<rect x="807.9210474929403" y="605.4938509182391" width="9.753747254191946" height="11.377140466761546" fill="#e9eaee" transform="rotate(-25 812.7979211200362 611.1824211516199)"/>
<rect x="837.3818621592545" y="660.5478401634527" width="8.789882882488886" height="8.259126850239731" fill="#e9eaee" transform="rotate(-25 841.776803600499 664.6774035885726)"/>
<rect x="843.9951989246803" y="682.6454253316499" width="14.307199977168542" height="21.686748178991756" fill="#e9eaee" transform="rotate(-25 851.1487989132645 693.4887994211458)"/>
<rect x="854.8491953227696" y="710.0875609949335" width="24.289351839443185" height="16.49592775935476" fill="#e9eaee" transform="rotate(-25 866.9938712424912 718.3355248746109)"/>
<rect x="864.4141456599848" y="714.2533340566669" width="9.976063804581386" height="8.900599746873798" fill="#e9eaee" transform="rotate(-25 869.4021775622755 718.7036339301037)"/>
<rect x="879.6447556348506" y="766.6863994075184" width="17.197427038714817" height="17.87040302092486" fill="#e9eaee" transform="rotate(-25 888.243469154208 775.6216009179808)"/>
<rect x="890.0127630953159" y="794.8319657929802" width="23.732786296125518" height="13.660062391813055" fill="#e9eaee" transform="rotate(-25 901.8791562433787 801.6619969888867)"/>
<rect x="906.1105126153429" y="819.2414480876056" width="25.139508123732902" height="21.376778439306452" fill="#e9eaee" transform="rotate(-25 918.6802666772094 829.9298373072588)"/>
<rect x="916.3186255661993" y="848.2244392363714" width="24.085269628378676" height="19.437044137709467" fill="#e9eaee" transform="rotate(-25 928.3612603803887 857.9429613052262)"/>
<rect x="935.4530958527472" y="879.7433337321116" width="15.57479915985642" height="14.11496024777133" fill="#e9eaee" transform="rotate(-25 943.2404954326754 886.8008138559973)"/>
<rect x="932.7235038135314" y="886.1260306302377" width="11.331161452974701" height="12.787110509655966" fill="#e9eaee" transform="rotate(-25 938.3890845400188 892.5195858850657)"/>
<rect x="942.3082035942174" y="903.6112783593109" width="24.690093796608174" height="17.044902430978816" fill="#e9eaee" transform="rotate(-25 954.6532504925215 912.1337295748002)"/>
<rect x="782.1099773103823" y="485.0537318000473" width="14.00822587201892" height="13.641381555121706" fill="#e9eaee" transform="rotate(-25 789.1140902463918 491.87442257760813)"/>
<rect x="793.2678100915725" y="510.92545923006014" width="25.451072633943575" height="20.29652163538686" fill="#e9eaee" transform="rotate(-25 805.9933464085443 521.0737200477536)"/>
<rect x="819.4231201345372" y="559.8601868194564" width="21.679505797722797" height="23.157918671889885" fill="#e9eaee" transform="rotate(-25 830.2628730333986 571.4391461554013)"/>
<rect x="831.6019661281738" y="567.3012197517251" width="9.24858233172683" height="9.094306574386302" fill="#e9eaee" transform="rotate(-25 836.2262572940372 571.8483730389182)"/>
<rect x="836.3808738400035" y="595.0744161442226" width="16.85711877446658" height="13.716627505483507" fill="#e9eaee" transform="rotate(-25 844.8094332272367 601.9327298969644)"/>
<rect x="836.8030653017272" y="594.9537628410109" width="9.426703562218052" height="11.977715171359812" fill="#e9eaee" transform="rotate(-25 841.5164170828363 600.9426204266907)"/>
<rect x="845.2288574797165" y="620.4130786552614" width="16.03145542872437" height="12.613783149894912" fill="#e9eaee" transform="rotate(-25 853.2445851940786 626.7199702302089)"/>
<rect x="843.1553134446865" y="623.369841084004" width="8.294926016426484" height="10.877220773669068" fill="#e9eaee" transform="rotate(-25 847.3027764528997 628.8084514708385)"/>
<rect x="860.923766318511" y="645.59185453778" width="18.825407792012044" height="17.127659224794865" fill="#e9eaee" transform="rotate(-25 870.336470214517 654.1556841501774)"/>
<rect x="860.5518360385748" y="645.4086751927578" width="8.85861934076255" height="9.24739449082763" fill="#e9eaee" transform="rotate(-25 864.9811457089561 650.0323724381716)"/>
<rect x="874.2826891667744" y="674.9569189269866" width="8.798696073641587" height="10.041673883230665" fill="#e9eaee" transform="rotate(-25 878.6820372035952 679.977755868602)"/>
<rect x="900.1016033796883" y="724.9356834949923" width="14.510127648117983" height="20.31422293444514" fill="#e9eaee" transform="rotate(-25 907.3566672037473 735.0927949622148)"/>
<rect x="904.101740591518" y="752.710920221287" width="24.699771933312995" height="17.66477047505726" fill="#e9eaee" transform="rotate(-25 916.4516265581746 761.5433054588157)"/>
<rect x="920.2368892318618" y="780.802935326561" width="24.64051626210957" height="14.841245862894358" fill="#e9eaee" transform="rotate(-25 932.5571473629166 788.2235582580082)"/>
<rect x="933.5435692457637" y="805.1842515201971" width="25.48993650853133" height="22.356427514349637" fill="#e9eaee" transform="rotate(-25 946.2885375000294 816.3624652773719)"/>
<rect x="949.9766852497991" y="831.2805665142502" width="14.259089518232248" height="23.077261674726927" fill="#e9eaee" transform="rotate(-25 957.1062300089152 842.8191973516136)"/>
<rect x="959.782231743304" y="865.9078882702563" width="25.64207319072423" height="15.285785329054423" fill="#e9eaee" transform="rotate(-25 972.6032683386661 873.5507809347836)"/>
<rect x="963.0493663909335" y="874.4399246283557" width="13.63810741755276" height="10.114185668309208" fill="#e9eaee" transform="rotate(-25 969.86842009971 879.4970174625103)"/>
<rect x="986.4513783558175" y="913.0517494454725" width="20.15407230361678" height="23.20829193387867" fill="#e9eaee" transform="rotate(-25 996.5284145076259 924.6558954124118)"/>
<rect x="996.1441219514795" y="941.5820365009977" width="25.00558390236167" height="18.84902379134222" fill="#e9eaee" transform="rotate(-25 1008.6469139026603 951.0065483966688)"/>
<rect x="873.5005158015836" y="604.7241251299722" width="20.010020092968446" height="14.455088971759908" fill="#e9eaee" transform="rotate(-25 883.5055258480678 611.9516696158522)"/>
<rect x="888.3694022126292" y="631.0203301365284" width="16.424872724211536" height="13.998672911553331" fill="#e9eaee" transform="rotate(-25 896.581838574735 638.019666592305)"/>
<rect x="904.756219197476" y="662.0136879183103" width="10.797038313003466" height="11.436069785975132" fill="#e9eaee" transform="rotate(-25 910.1547383539777 667.7317228112979)"/>
<rect x="910.0926898277748" y="684.4979929353157" width="24.998863594911708" height="19.262090003195716" fill="#e9eaee" transform="rotate(-25 922.5921216252307 694.1290379369135)"/>
<rect x="924.1760698424322" y="719.1508277853769" width="15.582944105100669" height="13.453397355151349" fill="#e9eaee" transform="rotate(-25 931.9675418949826 725.8775264629526)"/>
<rect x="949.0314657920333" y="770.8035204919235" width="18.593883557231234" height="15.179823450515292" fill="#e9eaee" transform="rotate(-25 958.3284075706489 778.393432217181)"/>
<rect x="949.0006720631645" y="775.0099944884342" width="12.79367679445158" height="12.116247240487045" fill="#e9eaee" transform="rotate(-25 955.3975104603903 781.0681181086778)"/>
<rect x="962.188689477992" y="792.6558463798149" width="16.911348213742155" height="23.97328250492411" fill="#e9eaee" transform="rotate(-25 970.6443635848632 804.6424876322769)"/>
<rect x="974.6733067251947" y="824.0932820588857" width="17.527279905693124" height="17.0142906046939" fill="#e9eaee" transform="rotate(-25 983.4369466780413 832.6004273612327)"/>
<rect x="989.9729212020502" y="853.1388292296209" width="19.46629354709603" height="14.664956921865297" fill="#e9eaee" transform="rotate(-25 999.7060679755982 860.4713076905535)"/>
<rect x="997.4365034825443" y="878.606831857761" width="19.52942177359607" height="17.519425915403012" fill="#e9eaee" transform="rotate(-25 1007.2012143693423 887.3665448154625)"/>
<rect x="997.5998350192554" y="882.4547849916323" width="10.843484639595454" height="9.820307748320698" fill="#e9eaee" transform="rotate(-25 1003.0215773390531 887.3649388657926)"/>
<rect x="1011.4123292956342" y="904.3114204477727" width="15.244526129515677" height="19.194224607385184" fill="#e9eaee" transform="rotate(-25 1019.034592360392 913.9085327514653)"/>
<rect x="1015.3726073193595" y="910.9326665591811" width="8.085728756335856" height="10.986774088512075" fill="#e9eaee" transform="rotate(-25 1019.4154716975274 916.4260536034371)"/>
<rect x="1037.6302773718483" y="957.6055394346029" width="23.76139406557655" height="21.07003187426453" fill="#e9eaee" transform="rotate(-25 1049.5109744046365 968.1405553717351)"/>
<rect x="847.2331551817886" y="483.2190104614797" width="22.61269131117933" height="16.762295937597223" fill="#e9eaee" transform="rotate(-25 858.5395008373782 491.60015843027827)"/>
<rect x="863.4280131331775" y="511.26922414621436" width="14.034046613183875" height="21.053281908479626" fill="#e9eaee" transform="rotate(-25 870.4450364397694 521.7958651004542)"/>
<rect x="898.1070480004131" y="590.9534535763153" width="21.266298337449953" height="20.52639979344353" fill="#e9eaee" transform="rotate(-25 908.7401971691381 601.216653473037)"/>
<rect x="915.4121918501046" y="622.6667396275122" width="8.518374469347284" height="11.545321894596372" fill="#e9eaee" transform="rotate(-25 919.6713790847782 628.4394005748104)"/>
<rect x="927.2697875108678" y="645.3830642991487" width="20.748196071861578" height="21.19457084051586" fill="#e9eaee" transform="rotate(-25 937.6438855467986 655.9803497194066)"/>
<rect x="932.7118245044786" y="650.8682729877823" width="13.452345568600006" height="12.65677045170259" fill="#e9eaee" transform="rotate(-25 939.4379972887787 657.1966582136337)"/>
<rect x="953.7379737988765" y="702.1519995562061" width="15.28879544067564" height="18.69374159801902" fill="#e9eaee" transform="rotate(-25 961.3823715192143 711.4988703552156)"/>
<rect x="960.3312759595634" y="703.1539625748976" width="13.373618362383073" height="10.000400660895378" fill="#e9eaee" transform="rotate(-25 967.0180851407549 708.1541629053453)"/>
<rect x="958.5802433981613" y="729.4158325061401" width="25.92452743037189" height="19.41109513813319" fill="#e9eaee" transform="rotate(-25 971.5425071133473 739.1213800752066)"/>
<rect x="963.7822406295915" y="728.8797607374934" width="10.961395999666047" height="11.166623307044198" fill="#e9eaee" transform="rotate(-25 969.2629386294245 734.4630723910154)"/>
<rect x="973.2199978713089" y="756.4410227372294" width="23.83734755831724" height="20.149440562955025" fill="#e9eaee" transform="rotate(-25 985.1386716504676 766.515743018707)"/>
<rect x="984.3924452960737" y="756.7858784955392" width="9.411474363772811" height="8.17011988833139" fill="#e9eaee" transform="rotate(-25 989.0981824779601 760.8709384397049)"/>
<rect x="1041.0687595048091" y="890.6218780517323" width="14.914141393785346" height="18.49681752724702" fill="#e9eaee" transform="rotate(-25 1048.5258302017019 899.8702868153558)"/>
<rect x="1051.3398404681695" y="919.1876171078703" width="17.623348443037965" height="20.029418887641413" fill="#e9eaee" transform="rotate(-25 1060.1515146896886 929.202326551691)"/>
<rect x="1053.7808371657834" y="920.1732927685762" width="13.29227782927023" height="9.268337210801777" fill="#e9eaee" transform="rotate(-25 1060.4269760804184 924.807461373977)"/>
<rect x="894.219867524872" y="496.71693591265483" width="14.100277135836091" height="18.914069986104188" fill="#e9eaee" transform="rotate(-25 901.27000609279 506.17397090570694)"/>
<rect x="899.1943876720732" y="497.85901243360496" width="13.2975257479841" height="10.00137885509285" fill="#e9eaee" transform="rotate(-25 905.8431505460652 502.8597018611514)"/>
<rect x="915.7859315457833" y="554.5367664959027" width="16.818169803894406" height="13.238018723534797" fill="#e9eaee" transform="rotate(-25 924.1950164477305 561.1557758576702)"/>
<rect x="917.9794698266544" y="559.5242807933362" width="8.04131125979245" height="11.012299438453429" fill="#e9eaee" transform="rotate(-25 922.0001254565506 565.0304305125629)"/>
<rect x="936.2522004702944" y="610.6760966752786" width="24.542172658531364" height="15.74533059892933" fill="#e9eaee" transform="rotate(-25 948.5232867995601 618.5487619747432)"/>
<rect x="939.9315760842373" y="610.0570666013766" width="8.792428063352745" height="9.88383517628088" fill="#e9eaee" transform="rotate(-25 944.3277901159137 614.998984189517)"/>
<rect x="952.9006487601584" y="635.3551844286659" width="23.035579602519213" height="12.88711608679094" fill="#e9eaee" transform="rotate(-25 964.418438561418 641.7987424720613)"/>
<rect x="964.3343924526617" y="635.1728710661645" width="9.047962643746265" height="9.101905280692941" fill="#e9eaee" transform="rotate(-25 968.8583737745349 639.723823706511)"/>
<rect x="966.1205971519901" y="664.0715183481865" width="22.53979019135498" height="17.540947493706383" fill="#e9eaee" transform="rotate(-25 977.3904922476676 672.8419920950397)"/>
<rect x="970.4176242350097" y="664.5312046061124" width="9.502186030557418" height="12.761648908918179" fill="#e9eaee" transform="rotate(-25 975.1687172502884 670.9120290605715)"/>
<rect x="993.5445168048014" y="724.56134033807" width="10.60899253704143" height="8.769097744494763" fill="#e9eaee" transform="rotate(-25 998.8490130733221 728.9458892103173)"/>
<rect x="1016.2739965611473" y="772.9944449315806" width="14.92424176420288" height="19.160886048717185" fill="#e9eaee" transform="rotate(-25 1023.7361174432488 782.5748879559392)"/>
<rect x="1022.9675100288464" y="782.2705021432782" width="9.716585234041807" height="8.868721514708994" fill="#e9eaee" transform="rotate(-25 1027.8258026458673 786.7048629006327)"/>
<rect x="1027.7240031164129" y="801.3907775074414" width="22.45419195225668" height="13.482616509435301" fill="#e9eaee" transform="rotate(-25 1038.9510990925412 808.132085762159)"/>
<rect x="1039.245615554167" y="821.1031074310047" width="17.593278451594426" height="22.933008971337383" fill="#e9eaee" transform="rotate(-25 1048.0422547799642 832.5696119166734)"/>
<rect x="1060.1997899699438" y="855.739567712453" width="9.3302085261081" height="9.875971170487865" fill="#e9eaee" transform="rotate(-25 1064.8648942329978 860.6775532976969)"/>
<rect x="1064.23091215048" y="875.8928808261905" width="24.22411976467248" height="23.868303960919967" fill="#e9eaee" transform="rotate(-25 1076.3429720328163 887.8270328066505)"/>
<rect x="1082.0816927722628" y="904.5983206074483" width="16.671906450507407" height="17.998416837573778" fill="#e9eaee" transform="rotate(-25 1090.4176459975165 913.5975290262352)"/>
<rect x="1103.1178765830375" y="956.8176896408839" width="17.95841271603519" height="22.437631704758775" fill="#e9eaee" transform="rotate(-25 1112.097082941055 968.0365054932633)"/>
<rect x="918.2949921675859" y="485.74074469382936" width="19.69159336247828" height="15.617968036844685" fill="#e9eaee" transform="rotate(-25 928.140788848825 493.5497287122517)"/>
<rect x="938.4213062422795" y="536.7048612827743" width="24.40495165901092" height="19.77099158186309" fill="#e9eaee" transform="rotate(-25 950.623782071785 546.590357073706)"/>
<rect x="956.4681785002188" y="571.7685118531552" width="19.10295670151078" height="14.371390652724084" fill="#e9eaee" transform="rotate(-25 966.0196568509741 578.9542071795173)"/>
<rect x="978.5129020111293" y="622.967771672526" width="17.03442708558311" height="19.746594520151724" fill="#e9eaee" transform="rotate(-25 987.0301155539208 632.841068932602)"/>
<rect x="993.6917685425794" y="648.7326003856308" width="14.66199897615123" height="22.650566925276472" fill="#e9eaee" transform="rotate(-25 1001.022768030655 660.0578838482691)"/>
<rect x="1015.1902090935728" y="700.7486755292387" width="25.321643901085245" height="23.60077566081261" fill="#e9eaee" transform="rotate(-25 1027.8510310441154 712.549063359645)"/>
<rect x="1026.6991801106967" y="729.1811867618856" width="23.70884072018724" height="23.065595005249733" fill="#e9eaee" transform="rotate(-25 1038.5536004707903 740.7139842645104)"/>
<rect x="1040.3519498833452" y="757.2762156923783" width="20.44147213607041" height="21.82422009544198" fill="#e9eaee" transform="rotate(-25 1050.5726859513804 768.1883257400992)"/>
<rect x="1069.046631931999" y="811.9086872172987" width="22.118520839847204" height="16.81186098153267" fill="#e9eaee" transform="rotate(-25 1080.1058923519226 820.314617708065)"/>
<rect x="1078.6600412821329" y="838.4840170060435" width="21.804198381941703" height="18.219824575750128" fill="#e9eaee" transform="rotate(-25 1089.5621404731037 847.5939292939186)"/>
<rect x="1096.2338255552706" y="865.7263093867184" width="17.21531246227515" height="18.703301814382417" fill="#e9eaee" transform="rotate(-25 1104.8414817864082 875.0779602939097)"/>
<rect x="1105.9005617407786" y="894.388620759385" width="23.201745156361028" height="18.995617830804292" fill="#e9eaee" transform="rotate(-25 1117.5014343189591 903.8864296747872)"/>
<rect x="1106.46399920532" y="898.5449738244424" width="13.083105421846353" height="13.704676255033725" fill="#e9eaee" transform="rotate(-25 1113.0055519162433 905.3973119519593)"/>
<rect x="1126.8793579614562" y="926.437096312631" width="8.981875989028756" height="9.185385495074659" fill="#e9eaee" transform="rotate(-25 1131.3702959559705 931.0297890601682)"/>
<rect x="1132.6049046399787" y="949.0089791377148" width="20.589669171222518" height="12.213858671376272" fill="#e9eaee" transform="rotate(-25 1142.8997392255899 955.115908473403)"/>
<rect x="1132.943471954615" y="954.4063919129812" width="12.711634684513825" height="8.524550379629556" fill="#e9eaee" transform="rotate(-25 1139.2992892968718 958.668667102796)"/>
<rect x="955.5023375154454" y="504.2430166721382" width="21.077066614894882" height="12.464736408036234" fill="#e9eaee" transform="rotate(-25 966.0408708228929 510.47538487615634)"/>
<rect x="970.5478710065687" y="524.098596777573" width="21.4787696799933" height="23.715058408656244" fill="#e9eaee" transform="rotate(-25 981.2872558465654 535.9561259819011)"/>
<rect x="993.6938086740084" y="581.9197943690712" width="18.241214651625867" height="21.635722510766705" fill="#e9eaee" transform="rotate(-25 1002.8144159998213 592.7376556244545)"/>
<rect x="1014.8256542085095" y="634.5889292805921" width="24.297174380689547" height="22.675506453078" fill="#e9eaee" transform="rotate(-25 1026.9742413988542 645.9266825071311)"/>
<rect x="1034.0776400392833" y="668.5176467317419" width="17.672251171012427" height="13.649735376358954" fill="#e9eaee" transform="rotate(-25 1042.9137656247894 675.3425144199214)"/>
<rect x="1058.6322967426995" y="715.9097049886807" width="21.78283696782448" height="22.460692141854377" fill="#e9eaee" transform="rotate(-25 1069.5237152266118 727.1400510596079)"/>
<rect x="1071.566698157739" y="745.1516014598241" width="16.702718256480317" height="20.162134633710117" fill="#e9eaee" transform="rotate(-25 1079.918057285979 755.2326687766791)"/>
<rect x="1083.7183318434681" y="776.360146809712" width="14.451303952909948" height="13.936375333934489" fill="#e9eaee" transform="rotate(-25 1090.9439838199232 783.3283344766792)"/>
<rect x="1088.1315410609282" y="773.0598196868801" width="10.240532441262046" height="11.722617560386853" fill="#e9eaee" transform="rotate(-25 1093.2518072815592 778.9211284670736)"/>
<rect x="1111.3498022017122" y="831.7410464096089" width="10.209927086778503" height="10.388922641858446" fill="#e9eaee" transform="rotate(-25 1116.4547657451014 836.9355077305381)"/>
<rect x="1152.229878004468" y="909.5929043364245" width="11.308546117585847" height="10.61055415525017" fill="#e9eaee" transform="rotate(-25 1157.884151063261 914.8981814140495)"/>
<rect x="981.1871025605624" y="489.4021058516452" width="17.828977996226108" height="12.603249976303326" fill="#e9eaee" transform="rotate(-25 990.1015915586754 495.7037308397969)"/>
<rect x="988.8410798514178" y="486.0520298708273" width="11.052964598723607" height="13.105361327126666" fill="#e9eaee" transform="rotate(-25 994.3675621507796 492.6047105343906)"/>
<rect x="996.4691759127338" y="515.1901016404529" width="14.362748517403851" height="22.687698138576735" fill="#e9eaee" transform="rotate(-25 1003.6505501714357 526.5339507097412)"/>
<rect x="1012.1196019659212" y="550.354036474531" width="10.54026367885615" height="8.84959543621147" fill="#e9eaee" transform="rotate(-25 1017.3897338053494 554.7788341926367)"/>
<rect x="1036.2140797741552" y="599.2232232678418" width="9.231695206719813" height="9.378465957459476" fill="#e9eaee" transform="rotate(-25 1040.829927377515 603.9124562465715)"/>
<rect x="1047.3965079099653" y="621.9273649090209" width="22.387967723046515" height="20.646161425085566" fill="#e9eaee" transform="rotate(-25 1058.5904917714886 632.2504456215637)"/>
<rect x="1067.3948686868175" y="654.1328089005607" width="8.223356584342607" height="9.20408660350873" fill="#e9eaee" transform="rotate(-25 1071.5065469789888 658.7348522023151)"/>
<rect x="1072.8265194345315" y="677.184441521787" width="15.376240281742584" height="20.292324009339946" fill="#e9eaee" transform="rotate(-25 1080.5146395754027 687.3306035264569)"/>
<rect x="1073.4692592035199" y="683.3664848574405" width="8.145107347683611" height="9.972735255548356" fill="#e9eaee" transform="rotate(-25 1077.5418128773617 688.3528524852146)"/>
<rect x="1088.7258778435273" y="704.3683790817608" width="16.004023906219572" height="21.002667822782314" fill="#e9eaee" transform="rotate(-25 1096.727889796637 714.869712993152)"/>
<rect x="1093.4940179764205" y="734.985647750315" width="22.31869952817707" height="14.432879807003161" fill="#e9eaee" transform="rotate(-25 1104.653367740509 742.2020876538166)"/>
<rect x="1125.2853316403011" y="788.182530081132" width="17.2777455439186" height="16.484390950913994" fill="#e9eaee" transform="rotate(-25 1133.9242044122605 796.424725556589)"/>
<rect x="1173.400124721135" y="898.6563291349635" width="20.275544378193487" height="14.11886846786965" fill="#e9eaee" transform="rotate(-25 1183.5378969102317 905.7157633688983)"/>
<rect x="1187.845132591565" y="923.5869905276599" width="16.373132230668634" height="19.724507688275924" fill="#e9eaee" transform="rotate(-25 1196.0316987068993 933.4492443717978)"/>
<rect x="1197.4362581549456" y="944.986266884511" width="23.97659217130903" height="21.060533820162433" fill="#e9eaee" transform="rotate(-25 1209.4245542406002 955.5165337945922)"/>
<rect x="1035.8852812872854" y="530.9531255498615" width="21.197915220521843" height="13.555956684631974" fill="#e9eaee" transform="rotate(-25 1046.4842388975462 537.7311038921775)"/>
<rect x="1041.9268762457755" y="538.3756518886896" width="11.606076040929725" height="9.258779735850007" fill="#e9eaee" transform="rotate(-25 1047.7299142662403 543.0050417566147)"/>
<rect x="1052.3383490170913" y="559.9939861278049" width="18.41962034743719" height="12.402467462478286" fill="#e9eaee" transform="rotate(-25 1061.5481591908099 566.1952198590441)"/>
<rect x="1078.0619564082103" y="610.2328034991856" width="14.432623416707502" height="19.132775046793526" fill="#e9eaee" transform="rotate(-25 1085.278268116564 619.7991910225824)"/>
<rect x="1081.0866356147046" y="617.77664423945" width="8.842048332345945" height="10.621298170010057" fill="#e9eaee" transform="rotate(-25 1085.5076597808777 623.087293324455)"/>
<rect x="1084.965974903018" y="638.2937072282784" width="21.325632041320365" height="14.082218342405877" fill="#e9eaee" transform="rotate(-25 1095.628790923678 645.3348163994814)"/>
<rect x="1085.5869004374" y="646.2432865240338" width="13.384425119048647" height="8.66815914501051" fill="#e9eaee" transform="rotate(-25 1092.2791129969241 650.5773660965391)"/>
<rect x="1100.6332199664978" y="663.9563937651983" width="17.01590435321151" height="19.805026680910935" fill="#e9eaee" transform="rotate(-25 1109.1411721431036 673.8589071056538)"/>
<rect x="1109.598821586718" y="664.4383704817417" width="10.086714699451717" height="13.694576351187669" fill="#e9eaee" transform="rotate(-25 1114.642178936444 671.2856586573355)"/>
<rect x="1109.8712430749097" y="692.7085202880904" width="17.758833391214495" height="15.8274374431179" fill="#e9eaee" transform="rotate(-25 1118.750659770517 700.6222390096493)"/>
<rect x="1127.3200250825444" y="716.1856138406023" width="18.47597038663281" height="22.2326845708656" fill="#e9eaee" transform="rotate(-25 1136.5580102758609 727.3019561260351)"/>
<rect x="1134.8784350688613" y="747.9377563662348" width="18.207863586616934" height="15.818584635001136" fill="#e9eaee" transform="rotate(-25 1143.9823668621698 755.8470486837354)"/>
<rect x="1147.787593046624" y="768.9990853045783" width="23.866080280081896" height="22.50693535799055" fill="#e9eaee" transform="rotate(-25 1159.7206331866648 780.2525529835737)"/>
<rect x="1160.0444082576398" y="805.0124005512839" width="22.103411407738363" height="14.656564129340039" fill="#e9eaee" transform="rotate(-25 1171.096113961509 812.3406826159539)"/>
<rect x="1195.9020774192152" y="861.1484985350959" width="10.463659948034945" height="9.42757246916198" fill="#e9eaee" transform="rotate(-25 1201.1339073932327 865.8622847696769)"/>
<rect x="1202.973479794136" y="883.0702495424596" width="15.021390743520737" height="13.104154120855547" fill="#e9eaee" transform="rotate(-25 1210.4841751658964 889.6223266028874)"/>
<rect x="1226.60832923247" y="935.2035267628869" width="16.214882448758846" height="23.92341672323716" fill="#e9eaee" transform="rotate(-25 1234.7157704568494 947.1652351245054)"/>
<rect x="1044.8626415925435" y="490.59660690534724" width="25.01014756912802" height="18.26981605796183" fill="#e9eaee" transform="rotate(-25 1057.3677153771075 499.7315149343282)"/>
<rect x="1063.3264481144672" y="515.856217044741" width="14.616667933438713" height="20.533390699861354" fill="#e9eaee" transform="rotate(-25 1070.6347820811866 526.1229123946717)"/>
<rect x="1060.5386257914342" y="520.6268686586072" width="13.525048963270976" height="9.416470230566311" fill="#e9eaee" transform="rotate(-25 1067.3011502730697 525.3351037738904)"/>
<rect x="1102.7872361679358" y="601.3805017178173" width="22.414955137505284" height="13.48768502635285" fill="#e9eaee" transform="rotate(-25 1113.9947137366885 608.1243442309938)"/>
<rect x="1114.78605034642" y="623.2718034315882" width="14.972604262142905" height="21.72698964312154" fill="#e9eaee" transform="rotate(-25 1122.2723524774915 634.1352982531489)"/>
<rect x="1123.2523948298506" y="656.1611660777744" width="20.54126917829265" height="14.00434309563354" fill="#e9eaee" transform="rotate(-25 1133.5230294189969 663.1633376255911)"/>
<rect x="1135.4872585581234" y="683.5752642112656" width="24.848074639527123" height="12.0996226871769" fill="#e9eaee" transform="rotate(-25 1147.911295877887 689.625075554854)"/>
<rect x="1139.5049883806523" y="685.9961460062201" width="10.230818089797495" height="13.170126231800644" fill="#e9eaee" transform="rotate(-25 1144.6203974255511 692.5812091221204)"/>
<rect x="1152.1125467837073" y="707.7159052880112" width="15.034331404525627" height="13.827932609055296" fill="#e9eaee" transform="rotate(-25 1159.6297124859702 714.6298715925388)"/>
<rect x="1163.7433025506791" y="732.9992298736784" width="20.257867386760395" height="17.343159540034428" fill="#e9eaee" transform="rotate(-25 1173.8722362440594 741.6708096436955)"/>
<rect x="1179.502659020747" y="757.450035342473" width="14.77721412564986" height="21.539904526208417" fill="#e9eaee" transform="rotate(-25 1186.891266083572 768.2199876055772)"/>
<rect x="1184.699099279823" y="789.2776008931643" width="25.07501359038865" height="16.948405038824404" fill="#e9eaee" transform="rotate(-25 1197.2366060750173 797.7518034125765)"/>
<rect x="1197.9653572099178" y="814.8592816068764" width="21.699425879925215" height="17.362354848837512" fill="#e9eaee" transform="rotate(-25 1208.8150701498803 823.5404590312951)"/>
<rect x="1231.6623452516967" y="873.4058386884309" width="18.796057798428983" height="13.744732786952436" fill="#e9eaee" transform="rotate(-25 1241.0603741509112 880.2782050819071)"/>
<rect x="1239.4697855949319" y="894.5730752981493" width="19.57945774836638" height="19.49774518944026" fill="#e9eaee" transform="rotate(-25 1249.259514469115 904.3219478928695)"/>
<rect x="1264.3180763467951" y="953.6971946758932" width="24.438827348647866" height="12.488164405430576" fill="#e9eaee" transform="rotate(-25 1276.537490021119 959.9412768786085)"/>
<rect x="1266.9589384345304" y="956.7732421665506" width="11.730223066392231" height="8.598931282257837" fill="#e9eaee" transform="rotate(-25 1272.8240499677265 961.0727078076795)"/>
<rect x="1092.595810609733" y="504.3183421033383" width="17.118118867724945" height="21.843166860103544" fill="#e9eaee" transform="rotate(-25 1101.1548700435956 515.2399255333901)"/>
<rect x="1099.8721405717226" y="533.1013845166291" width="22.86395361622303" height="16.780091604184936" fill="#e9eaee" transform="rotate(-25 1111.3041173798342 541.4914303187215)"/>
<rect x="1109.3617039427659" y="537.6983697893756" width="10.170558673045468" height="12.285381110497402" fill="#e9eaee" transform="rotate(-25 1114.4469832792886 543.8410603446243)"/>
<rect x="1114.9586042215449" y="559.6979191377354" width="18.125634826912922" height="17.022104877199848" fill="#e9eaee" transform="rotate(-25 1124.0214216350014 568.2089715763353)"/>
<rect x="1116.7809698014285" y="560.9082683552198" width="9.962064628741038" height="11.040437530421922" fill="#e9eaee" transform="rotate(-25 1121.762002115799 566.4284871204308)"/>
<rect x="1133.242053003591" y="589.1522115586764" width="15.615737895885808" height="13.054408678057797" fill="#e9eaee" transform="rotate(-25 1141.049921951534 595.6794158977053)"/>
<rect x="1152.5803748293986" y="637.0241452066043" width="18.792991209922228" height="21.21763391050628" fill="#e9eaee" transform="rotate(-25 1161.9768704343596 647.6329621618574)"/>
<rect x="1156.5873677672905" y="636.9485284726863" width="9.285442880653406" height="11.320861289056742" fill="#e9eaee" transform="rotate(-25 1161.2300892076173 642.6089591172147)"/>
<rect x="1169.5702000879116" y="672.0157852087875" width="16.78822354193423" height="12.739320670752031" fill="#e9eaee" transform="rotate(-25 1177.9643118588788 678.3854455441635)"/>
<rect x="1168.037676477397" y="666.7911304666827" width="8.691480100969589" height="11.219667076647005" fill="#e9eaee" transform="rotate(-25 1172.383416527882 672.4009640050062)"/>
<rect x="1181.9793293550042" y="698.9946709275731" width="15.042968060742984" height="13.751206572987417" fill="#e9eaee" transform="rotate(-25 1189.5008133853757 705.8702742140669)"/>
<rect x="1195.5536630762547" y="722.2520686440829" width="18.145623753536285" height="17.24865386301638" fill="#e9eaee" transform="rotate(-25 1204.6264749530228 730.8763955755911)"/>
<rect x="1199.7229200779088" y="744.7491679677458" width="24.561338244074427" height="23.70241343686498" fill="#e9eaee" transform="rotate(-25 1212.003589199946 756.6003746861784)"/>
<rect x="1218.8881672278417" y="780.4241947232197" width="15.350661444454051" height="12.030119427765772" fill="#e9eaee" transform="rotate(-25 1226.5634979500687 786.4392544371026)"/>
<rect x="1225.4353471471081" y="781.3265113463113" width="9.402668788532242" height="10.888829405157653" fill="#e9eaee" transform="rotate(-25 1230.1366815413742 786.7709260488901)"/>
<rect x="1226.2933831536411" y="801.8594599831923" width="25.14935095890442" height="17.372584161729876" fill="#e9eaee" transform="rotate(-25 1238.8680586330934 810.5457520640573)"/>
<rect x="1254.7269854767364" y="858.7449869722942" width="21.90149502590168" height="14.28357010573493" fill="#e9eaee" transform="rotate(-25 1265.6777329896872 865.8867720251617)"/>
<rect x="1285.3889437501614" y="915.678141779643" width="10.618569384401559" height="10.40956136874644" fill="#e9eaee" transform="rotate(-25 1290.6982284423623 920.8829224640162)"/>
<rect x="1295.0558769550994" y="941.4895209947884" width="11.71728445108884" height="11.48735798023453" fill="#e9eaee" transform="rotate(-25 1300.9145191806438 947.2331999849057)"/>
<rect x="1310.8137768829051" y="969.3629168943584" width="8.186872287869983" height="9.98700780539086" fill="#e9eaee" transform="rotate(-25 1314.90721302684 974.3564207970538)"/>
<rect x="1145.0429164472696" y="540.6839862825187" width="15.387380349885781" height="21.961582124372235" fill="#e9eaee" transform="rotate(-25 1152.7366066222125 551.6647773447048)"/>
<rect x="1153.3649613524742" y="543.6869196934273" width="8.913984395520343" height="12.18431789414226" fill="#e9eaee" transform="rotate(-25 1157.8219535502344 549.7790786404984)"/>
<rect x="1152.3206194506633" y="573.0631636404379" width="21.60380109993925" height="18.212349282076026" fill="#e9eaee" transform="rotate(-25 1163.122520000633 582.1693382814759)"/>
<rect x="1175.7813097388407" y="606.1092308632083" width="9.705951157888123" height="9.985051320468717" fill="#e9eaee" transform="rotate(-25 1180.6342853177848 611.1017565234426)"/>
<rect x="1179.375159525078" y="627.7793788101671" width="22.35826532968207" height="21.82890958791529" fill="#e9eaee" transform="rotate(-25 1190.5542921899191 638.6938336041248)"/>
<rect x="1238.1873254458496" y="743.3865733963452" width="9.031685603514656" height="8.486460575201061" fill="#e9eaee" transform="rotate(-25 1242.703168247607 747.6298036839457)"/>
<rect x="1245.301035911628" y="759.7775873562903" width="20.33704236292695" height="20.61166597991639" fill="#e9eaee" transform="rotate(-25 1255.4695570930917 770.0834203462484)"/>
<rect x="1267.8007551849023" y="823.0111151721192" width="23.21082642836227" height="13.091315062253685" fill="#e9eaee" transform="rotate(-25 1279.4061683990835 829.556772703246)"/>
<rect x="1276.374215901402" y="825.6857036452811" width="12.21000298222085" height="12.15916236170481" fill="#e9eaee" transform="rotate(-25 1282.4792173925125 831.7652848261336)"/>
<rect x="1281.8439717259257" y="849.3209868527191" width="16.90836785866286" height="15.632028059365899" fill="#e9eaee" transform="rotate(-25 1290.2981556552572 857.137000882402)"/>
<rect x="1293.2526007147706" y="873.7642242910863" width="18.023994874098605" height="16.13273047525987" fill="#e9eaee" transform="rotate(-25 1302.2645981518199 881.8305895287162)"/>
<rect x="1301.2971201340656" y="869.5186397989507" width="9.206141764457104" height="13.357454276278936" fill="#e9eaee" transform="rotate(-25 1305.9001910162942 876.1973669370902)"/>
<rect x="1307.824774658115" y="901.8846873189107" width="20.225362087228945" height="18.326625105406485" fill="#e9eaee" transform="rotate(-25 1317.9374557017295 911.0479998716139)"/>
<rect x="1143.42179627853" y="479.405838356873" width="16.959227455499345" height="15.548462507565917" fill="#e9eaee" transform="rotate(-25 1151.9014100062798 487.18006961065595)"/>
<rect x="1144.3406726694523" y="482.08426330190906" width="11.375093589253993" height="12.373767749199647" fill="#e9eaee" transform="rotate(-25 1150.0282194640793 488.27114717650886)"/>
<rect x="1159.989318232877" y="508.6235418387211" width="9.251392260970524" height="8.839996347956166" fill="#e9eaee" transform="rotate(-25 1164.6150143633622 513.0435400126992)"/>
<rect x="1174.8934281081827" y="540.8148875476228" width="10.868459451701344" height="8.175583854722863" fill="#e9eaee" transform="rotate(-25 1180.3276578340333 544.9026794749842)"/>
<rect x="1203.2101419398487" y="614.8260625058251" width="25.14187868832889" height="23.36429101640869" fill="#e9eaee" transform="rotate(-25 1215.781081284013 626.5082080140295)"/>
<rect x="1218.9619469983727" y="646.0797812733351" width="19.09561671226774" height="13.55743347069582" fill="#e9eaee" transform="rotate(-25 1228.5097553545065 652.858498008683)"/>
<rect x="1218.8631087187775" y="648.6024126061752" width="8.551539301388013" height="9.461960938338176" fill="#e9eaee" transform="rotate(-25 1223.1388783694715 653.3333930753444)"/>
<rect x="1238.337264283244" y="671.0906889877729" width="11.460349628558205" height="10.544807612067487" fill="#e9eaee" transform="rotate(-25 1244.067439097523 676.3630927938066)"/>
<rect x="1250.475477328182" y="694.9577556169438" width="16.234045280207248" height="23.93122895918127" fill="#e9eaee" transform="rotate(-25 1258.5924999682857 706.9233700965344)"/>
<rect x="1260.1900239631148" y="724.1571808487665" width="16.725208190530296" height="22.362684975718402" fill="#e9eaee" transform="rotate(-25 1268.55262805838 735.3385233366257)"/>
<rect x="1266.5826334784322" y="727.633371677469" width="12.619435471856097" height="8.764038178328596" fill="#e9eaee" transform="rotate(-25 1272.8923512143601 732.0153907666332)"/>
<rect x="1275.5870721863744" y="756.0922740234786" width="11.451480834410123" height="8.140135829001078" fill="#e9eaee" transform="rotate(-25 1281.3128126035795 760.1623419379791)"/>
<rect x="1287.4115355688868" y="777.5535580283643" width="16.82789288544448" height="21.56791837937721" fill="#e9eaee" transform="rotate(-25 1295.825482011609 788.3375172180529)"/>
<rect x="1313.7607626393487" y="831.1590278525507" width="14.28382096487451" height="18.624352946844006" fill="#e9eaee" transform="rotate(-25 1320.902673121786 840.4712043259727)"/>
<rect x="1316.0337969321731" y="832.0099306127479" width="12.656512011912671" height="8.119544590639258" fill="#e9eaee" transform="rotate(-25 1322.3620529381294 836.0697029080675)"/>
<rect x="1349.9868832040202" y="918.3290026948217" width="14.442891507479429" height="15.356844700963144" fill="#e9eaee" transform="rotate(-25 1357.20832895776 926.0074250453033)"/>
<rect x="1188.3173441482973" y="496.07031866625124" width="15.754264607055942" height="14.085109838626359" fill="#e9eaee" transform="rotate(-25 1196.1944764518253 503.11287358556444)"/>
<rect x="1192.0078914043768" y="493.3828396664924" width="9.863499995200254" height="8.884735807495506" fill="#e9eaee" transform="rotate(-25 1196.9396414019768 497.82520757024014)"/>
<rect x="1238.97570591508" y="600.3809728758229" width="16.314154420602996" height="20.26751176815737" fill="#e9eaee" transform="rotate(-25 1247.1327831253814 610.5147287599016)"/>
<rect x="1244.3620852043923" y="601.4193188477641" width="9.122423829406747" height="11.694994072661949" fill="#e9eaee" transform="rotate(-25 1248.9232971190957 607.2668158840951)"/>
<rect x="1244.135698373147" y="627.8584075889632" width="23.47761739142007" height="16.66389082807524" fill="#e9eaee" transform="rotate(-25 1255.8745070688572 636.1903530030008)"/>
<rect x="1259.0538520906273" y="655.0470447322426" width="21.199616609091645" height="14.928828632088628" fill="#e9eaee" transform="rotate(-25 1269.6536603951731 662.511459048287)"/>
<rect x="1269.6739353079865" y="655.0796923795934" width="11.952405354019726" height="10.647797803075816" fill="#e9eaee" transform="rotate(-25 1275.6501379849965 660.4035912811313)"/>
<rect x="1274.019872043679" y="679.8177707111072" width="21.792747372020706" height="20.322375083879002" fill="#e9eaee" transform="rotate(-25 1284.9162457296893 689.9789582530467)"/>
<rect x="1284.0200929388252" y="712.343338999323" width="17.342098791867265" height="13.55141658332074" fill="#e9eaee" transform="rotate(-25 1292.6911423347588 719.1190472909834)"/>
<rect x="1282.8084798858456" y="714.169027509148" width="8.806587055293432" height="8.172010472235335" fill="#e9eaee" transform="rotate(-25 1287.2117734134922 718.2550327452657)"/>
<rect x="1301.9315271862015" y="743.6017612779902" width="9.37884871698498" height="11.218893018686384" fill="#e9eaee" transform="rotate(-25 1306.620951544694 749.2112077873335)"/>
<rect x="1321.2402862124509" y="794.2761662742195" width="18.20965270294043" height="12.815925957653374" fill="#e9eaee" transform="rotate(-25 1330.345112563921 800.6841292530462)"/>
<rect x="1337.8051188016814" y="819.3804545738421" width="20.678987450206947" height="18.000448310747217" fill="#e9eaee" transform="rotate(-25 1348.1446125267848 828.3806787292158)"/>
<rect x="1350.4276985220672" y="848.4962712424788" width="16.834314608186514" height="19.019320057271717" fill="#e9eaee" transform="rotate(-25 1358.8448558261605 858.0059312711146)"/>
<rect x="1360.106667682471" y="874.9813345185704" width="22.280060919966836" height="14.18972830477001" fill="#e9eaee" transform="rotate(-25 1371.2466981424543 882.0761986709554)"/>
<rect x="1372.1228260043154" y="902.9783431201378" width="23.116123300434715" height="14.050826500567506" fill="#e9eaee" transform="rotate(-25 1383.6808876545326 910.0037563704216)"/>
<rect x="1378.235480438818" y="899.8084869829713" width="10.608027375771616" height="8.76894057547252" fill="#e9eaee" transform="rotate(-25 1383.5394941267039 904.1929572707076)"/>
<rect x="1404.7673015023" y="959.1112209144916" width="10.0398492593163" height="8.007900069886514" fill="#e9eaee" transform="rotate(-25 1409.787226131958 963.1151709494349)"/>
<rect x="1214.6781198597225" y="485.60818887432157" width="10.948662492062589" height="11.002718105853766" fill="#e9eaee" transform="rotate(-25 1220.152451105754 491.10954792724846)"/>
<rect x="1231.6377243654279" y="510.89128286852156" width="10.116829918040919" height="9.909776913000359" fill="#e9eaee" transform="rotate(-25 1236.6961393244483 515.8461713250217)"/>
<rect x="1235.3479867115325" y="534.7800918367914" width="20.103300884509142" height="17.33426970853654" fill="#e9eaee" transform="rotate(-25 1245.3996371537871 543.4472266910597)"/>
<rect x="1255.5989977399136" y="568.8550254496195" width="11.964105302401409" height="9.266640976336777" fill="#e9eaee" transform="rotate(-25 1261.5810503911143 573.4883459377878)"/>
<rect x="1263.1467434133967" y="591.2085425203222" width="19.513280346184185" height="14.835898211967233" fill="#e9eaee" transform="rotate(-25 1272.9033835864889 598.6264916263059)"/>
<rect x="1274.1708386724547" y="620.5462168387367" width="18.1556366727596" height="15.68562126568171" fill="#e9eaee" transform="rotate(-25 1283.2486570088345 628.3890274715775)"/>
<rect x="1285.7937536199568" y="644.3326117621098" width="21.942195562670715" height="18.690389566243145" fill="#e9eaee" transform="rotate(-25 1296.7648514012922 653.6778065452313)"/>
<rect x="1308.7104887145456" y="700.6280244143761" width="22.896415957917952" height="15.898821430197827" fill="#e9eaee" transform="rotate(-25 1320.1586966935047 708.577435129475)"/>
<rect x="1310.128860173358" y="700.4369871799096" width="11.874183611324233" height="12.229206991938774" fill="#e9eaee" transform="rotate(-25 1316.06595197902 706.551590675879)"/>
<rect x="1334.3661951758231" y="730.7060347578552" width="8.185454895961962" height="10.662647146268018" fill="#e9eaee" transform="rotate(-25 1338.458922623804 736.0373583309892)"/>
<rect x="1338.2697402694725" y="755.0740704511715" width="18.767262751437418" height="14.92742277017518" fill="#e9eaee" transform="rotate(-25 1347.6533716451913 762.537781836259)"/>
<rect x="1352.1339473957387" y="776.343195277873" width="21.63445213178857" height="21.168940571168356" fill="#e9eaee" transform="rotate(-25 1362.951173461633 786.9276655634571)"/>
<rect x="1362.6807929386382" y="807.6217325202731" width="19.965961053860347" height="19.55138155813114" fill="#e9eaee" transform="rotate(-25 1372.6637734655683 817.3974232993387)"/>
<rect x="1378.9620110231144" y="829.7503914502728" width="18.877288038055774" height="22.771547546898333" fill="#e9eaee" transform="rotate(-25 1388.4006550421423 841.136165223722)"/>
<rect x="1383.9915382485115" y="859.536950151987" width="23.355096432722483" height="20.3019087155586" fill="#e9eaee" transform="rotate(-25 1395.6690864648726 869.6879045097662)"/>
<rect x="1392.7056527940754" y="869.0251846524416" width="12.890797974061808" height="10.088750535827923" fill="#e9eaee" transform="rotate(-25 1399.1510517811064 874.0695599203556)"/>
<rect x="1410.101207165584" y="914.4723225055093" width="23.848477789636014" height="21.171148446732676" fill="#e9eaee" transform="rotate(-25 1422.025446060402 925.0578967288757)"/>
<rect x="1432.5087433871956" y="945.2468070932268" width="8.18856004762975" height="10.889362150459778" fill="#e9eaee" transform="rotate(-25 1436.6030234110106 950.6914881684568)"/>
<rect x="1267.885046381007" y="517.186480355136" width="15.775837064061886" height="22.778880351753955" fill="#e9eaee" transform="rotate(-25 1275.7729649130379 528.575920531013)"/>
<rect x="1277.7866139830223" y="550.8712371240523" width="22.52072935720091" height="15.248581957473071" fill="#e9eaee" transform="rotate(-25 1289.0469786616227 558.4955281027889)"/>
<rect x="1289.1598577114523" y="577.6986253870938" width="23.05240350124126" height="18.51870424986496" fill="#e9eaee" transform="rotate(-25 1300.686059462073 586.9579775120262)"/>
<rect x="1299.0582273112489" y="603.380670595538" width="21.560994258822465" height="21.50722626705806" fill="#e9eaee" transform="rotate(-25 1309.8387244406601 614.1342837290671)"/>
<rect x="1318.645184655599" y="635.3153115495574" width="11.918373539667767" height="11.369188835474294" fill="#e9eaee" transform="rotate(-25 1324.6043714254329 640.9999059672945)"/>
<rect x="1326.8934223836895" y="658.7105016999683" width="22.126222710180123" height="14.686451160074391" fill="#e9eaee" transform="rotate(-25 1337.9565337387796 666.0537272800054)"/>
<rect x="1341.8582326647183" y="688.0664627423523" width="19.78543233646269" height="16.082850602323493" fill="#e9eaee" transform="rotate(-25 1351.7509488329497 696.1078880435141)"/>
<rect x="1343.4741634886336" y="694.4500455929855" width="10.733166966613876" height="11.300948180046051" fill="#e9eaee" transform="rotate(-25 1348.8407469719405 700.1005196830085)"/>
<rect x="1356.5016370434719" y="718.3208334849409" width="8.496370216357573" height="9.354818533568324" fill="#e9eaee" transform="rotate(-25 1360.7498221516507 722.998242751725)"/>
<rect x="1361.330797339732" y="741.4568683061907" width="25.796130436035774" height="16.66744440009979" fill="#e9eaee" transform="rotate(-25 1374.2288625577498 749.7905905062406)"/>
<rect x="1395.466174416822" y="798.2686346541602" width="9.222613417677874" height="8.985005088467855" fill="#e9eaee" transform="rotate(-25 1400.077481125661 802.7611371983942)"/>
<rect x="1406.2567145593964" y="819.438722323883" width="19.51646158842747" height="21.545620003115744" fill="#e9eaee" transform="rotate(-25 1416.01494535361 830.2115323254409)"/>
<rect x="1417.0815493972846" y="848.6880073415705" width="14.66637597233685" height="17.03310317789468" fill="#e9eaee" transform="rotate(-25 1424.414737383453 857.2045589305178)"/>
<rect x="1421.4282947751121" y="850.5432238739448" width="9.955591191024567" height="9.308537288001988" fill="#e9eaee" transform="rotate(-25 1426.4060903706245 855.1974925179459)"/>
<rect x="1438.588422993775" y="902.8232069778828" width="25.440467727500994" height="19.18327836734977" fill="#e9eaee" transform="rotate(-25 1451.3086568575256 912.4148461615576)"/>
<rect x="1446.488253592981" y="900.2054008868619" width="13.970725925169258" height="12.444361298765097" fill="#e9eaee" transform="rotate(-25 1453.4736165555655 906.4275815362444)"/>
<rect x="1474.6120612380935" y="961.9829406856504" width="8.788163183819625" height="10.606114273760298" fill="#e9eaee" transform="rotate(-25 1479.0061428300032 967.2859978225306)"/>
<rect x="1280.4631313437578" y="482.96538446058094" width="17.77463178716738" height="13.668489444356155" fill="#e9eaee" transform="rotate(-25 1289.3504472373415 489.799629182759)"/>
<rect x="1295.9657385871888" y="507.80990828479713" width="15.569757346278406" height="21.255500799651056" fill="#e9eaee" transform="rotate(-25 1303.750617260328 518.4376586846226)"/>
<rect x="1333.539048238223" y="592.3880956266104" width="18.160718835891853" height="18.445681670731904" fill="#e9eaee" transform="rotate(-25 1342.6194076561687 601.6109364619763)"/>
<rect x="1370.947426753297" y="673.1029759440513" width="18.612421445863927" height="19.96338752670483" fill="#e9eaee" transform="rotate(-25 1380.253637476229 683.0846697074037)"/>
<rect x="1389.4280233093689" y="729.6513008458926" width="20.132542553525656" height="13.513728176635205" fill="#e9eaee" transform="rotate(-25 1399.4942945861317 736.4081649342102)"/>
<rect x="1402.5752537699204" y="758.6291865437494" width="25.886345141285574" height="13.425645243561755" fill="#e9eaee" transform="rotate(-25 1415.518426340563 765.3420091655303)"/>
<rect x="1408.9836316548306" y="761.2921173290982" width="13.069995229285981" height="8.159445293374162" fill="#e9eaee" transform="rotate(-25 1415.5186292694736 765.3718399757853)"/>
<rect x="1413.6035231875733" y="780.0564532497006" width="23.853392593940697" height="19.963668382259655" fill="#e9eaee" transform="rotate(-25 1425.5302194845435 790.0382874408303)"/>
<rect x="1418.5151040646049" y="788.92132801135" width="11.336416223622788" height="8.647590646983499" fill="#e9eaee" transform="rotate(-25 1424.1833121764162 793.2451233348418)"/>
<rect x="1430.2358192837264" y="807.7617187051741" width="16.777870451064366" height="15.615138485818276" fill="#e9eaee" transform="rotate(-25 1438.6247545092585 815.5692879480832)"/>
<rect x="1438.7361847903223" y="806.173564532905" width="8.536511920275858" height="8.789308753567376" fill="#e9eaee" transform="rotate(-25 1443.0044407504602 810.5682189096887)"/>
<rect x="1456.306203738879" y="859.3528785044466" width="20.575673953991853" height="21.989454851581346" fill="#e9eaee" transform="rotate(-25 1466.594040715875 870.3476059302373)"/>
<rect x="1462.9026792325988" y="861.8496509069993" width="13.744881154138383" height="13.733401930898621" fill="#e9eaee" transform="rotate(-25 1469.775119809668 868.7163518724486)"/>
<rect x="1472.8554051199387" y="896.8225916536354" width="9.549647348713169" height="10.071940487998312" fill="#e9eaee" transform="rotate(-25 1477.6302287942954 901.8585618976346)"/>
<rect x="1488.472550667443" y="921.3801389129965" width="9.978757159611995" height="8.098768172352909" fill="#e9eaee" transform="rotate(-25 1493.4619292472491 925.429522999173)"/>
<rect x="1343.8888137559047" y="549.5514813401365" width="25.28801588607429" height="23.536859735722125" fill="#e9eaee" transform="rotate(-25 1356.532821698942 561.3199112079976)"/>
<rect x="1347.4359047333776" y="557.4229853339104" width="11.2728838979173" height="10.534599940731152" fill="#e9eaee" transform="rotate(-25 1353.0723466823363 562.690285304276)"/>
<rect x="1355.040532456989" y="575.5107165421166" width="21.121029901108574" height="21.031996195384156" fill="#e9eaee" transform="rotate(-25 1365.6010474075433 586.0267146398087)"/>
<rect x="1364.497689602897" y="606.5710725583012" width="23.270981600083676" height="15.313814969433203" fill="#e9eaee" transform="rotate(-25 1376.133180402939 614.2279800430179)"/>
<rect x="1399.5476359358174" y="666.8608104869045" width="8.102667234697995" height="9.88048981947076" fill="#e9eaee" transform="rotate(-25 1403.5989695531664 671.8010553966399)"/>
<rect x="1406.4248129747912" y="685.3817898879221" width="19.82462381764367" height="17.681909790949682" fill="#e9eaee" transform="rotate(-25 1416.337124883613 694.2227447833969)"/>
<rect x="1418.6601215778526" y="719.0670267670021" width="22.94518741469842" height="13.863239675656143" fill="#e9eaee" transform="rotate(-25 1430.1327152852018 725.9986466048301)"/>
<rect x="1433.1307179688795" y="744.9722333575875" width="22.92869291301448" height="13.850856036156365" fill="#e9eaee" transform="rotate(-25 1444.5950644253867 751.8976613756656)"/>
<rect x="1442.016022763557" y="771.1265654229765" width="25.83791097806645" height="18.453053097533918" fill="#e9eaee" transform="rotate(-25 1454.93497825259 780.3530919717434)"/>
<rect x="1453.7439420904882" y="778.5509902687356" width="12.342812983726539" height="10.568468308437634" fill="#e9eaee" transform="rotate(-25 1459.9153485823515 783.8352244229544)"/>
<rect x="1472.5074448790626" y="825.1137381305264" width="19.549693984628632" height="15.489449593427679" fill="#e9eaee" transform="rotate(-25 1482.2822918713769 832.8584629272402)"/>
<rect x="1485.4639307791151" y="851.9064133189902" width="17.684359872723583" height="15.422656067206415" fill="#e9eaee" transform="rotate(-25 1494.306110715477 859.6177413525934)"/>
<rect x="1493.9194090171313" y="874.2686639193415" width="19.892085829409545" height="22.58700932972267" fill="#e9eaee" transform="rotate(-25 1503.865451931836 885.5621685842028)"/>
<rect x="1502.70966163267" y="880.8708900596375" width="13.376586274856164" height="13.310744387692353" fill="#e9eaee" transform="rotate(-25 1509.397954770098 887.5262622534837)"/>
<rect x="1510.13404355267" y="907.3344821262339" width="21.57665321231974" height="16.327106074200053" fill="#e9eaee" transform="rotate(-25 1520.9223701588298 915.4980351633338)"/>
<rect x="1513.8206974679067" y="912.9431388195928" width="8.800983799772176" height="8.623846171891742" fill="#e9eaee" transform="rotate(-25 1518.2211893677927 917.2550619055387)"/>
<rect x="1525.6547758913944" y="935.8864284452419" width="16.39661614062447" height="12.039165578901066" fill="#e9eaee" transform="rotate(-25 1533.8530839617065 941.9060112346924)"/>
<rect x="1540.720868549035" y="959.6830949998686" width="9.761844621293848" height="10.913301343233098" fill="#e9eaee" transform="rotate(-25 1545.6017908596818 965.1397456714851)"/>
<rect x="1357.699278959801" y="511.5415839963365" width="24.23026957355998" height="17.231215757299914" fill="#e9eaee" transform="rotate(-25 1369.8144137465808 520.1571918749864)"/>
<rect x="1372.606689934788" y="533.6465669939582" width="14.998871859867943" height="23.027610854617684" fill="#e9eaee" transform="rotate(-25 1380.106125864722 545.1603724212671)"/>
<rect x="1397.8620996869706" y="593.0386455444844" width="16.70604275483756" height="16.916717602738828" fill="#e9eaee" transform="rotate(-25 1406.2151210643895 601.4970043458538)"/>
<rect x="1396.937619670629" y="593.6099884632977" width="8.159374477691841" height="9.431306201914794" fill="#e9eaee" transform="rotate(-25 1401.0173069094749 598.3256415642551)"/>
<rect x="1410.90799728777" y="623.8747632097342" width="11.965218138371855" height="10.818358284523756" fill="#e9eaee" transform="rotate(-25 1416.890606356956 629.2839423519961)"/>
<rect x="1435.9384581456632" y="670.5655826058537" width="15.568912847843801" height="20.23116992926724" fill="#e9eaee" transform="rotate(-25 1443.722914569585 680.6811675704873)"/>
<rect x="1458.584309733847" y="729.537978270876" width="17.808820311692042" height="14.266675272713588" fill="#e9eaee" transform="rotate(-25 1467.4887198896931 736.6713159072328)"/>
<rect x="1500.3697311486203" y="810.2088674146726" width="16.41210443950526" height="21.512042663154716" fill="#e9eaee" transform="rotate(-25 1508.5757833683729 820.9648887462499)"/>
<rect x="1505.9169937724505" y="836.6723595674199" width="23.50080254704503" height="19.698126872752116" fill="#e9eaee" transform="rotate(-25 1517.667395045973 846.5214230037959)"/>
<rect x="1513.673029025258" y="840.9157792448242" width="9.569373813754211" height="11.215103692593008" fill="#e9eaee" transform="rotate(-25 1518.4577159321352 846.5233310911207)"/>
<rect x="1538.326462970766" y="896.1574175044025" width="10.73703242238051" height="11.091514550284927" fill="#e9eaee" transform="rotate(-25 1543.6949791819563 901.703174779545)"/>
<rect x="1546.399200205489" y="921.149689171697" width="23.343667156525612" height="18.090778170297703" fill="#e9eaee" transform="rotate(-25 1558.0710337837518 930.1950782568458)"/>
<rect x="1563.2851761046502" y="946.4571808822536" width="18.156648808039233" height="12.735912185244022" fill="#e9eaee" transform="rotate(-25 1572.3635005086699 952.8251369748756)"/>
<rect x="1384.0387448808183" y="502.23571878744326" width="24.56892631015252" height="15.183276552077551" fill="#e9eaee" transform="rotate(-25 1396.3232080358946 509.82735706348205)"/>
<rect x="1423.573199426248" y="579.6810677788114" width="24.36036561542916" height="21.16919602733178" fill="#e9eaee" transform="rotate(-25 1435.7533822339626 590.2656657924773)"/>
<rect x="1434.31714210564" y="609.7604279102832" width="22.877557429639992" height="17.01923418638532" fill="#e9eaee" transform="rotate(-25 1445.75592082046 618.2700450034758)"/>
<rect x="1448.8670738246017" y="636.0128113847891" width="20.032722038307284" height="13.624379801693506" fill="#e9eaee" transform="rotate(-25 1458.8834348437554 642.8250012856358)"/>
<rect x="1453.7817199950825" y="633.5831562274127" width="13.51354097403138" height="11.169151089381193" fill="#e9eaee" transform="rotate(-25 1460.5384904820983 639.1677317721033)"/>
<rect x="1460.2699259287672" y="662.8869764770906" width="18.756738044190868" height="13.633208961430348" fill="#e9eaee" transform="rotate(-25 1469.6482949508627 669.7035809578058)"/>
<rect x="1468.474537928296" y="668.103970029569" width="13.475098326508986" height="13.691870958617256" fill="#e9eaee" transform="rotate(-25 1475.2120870915505 674.9499055088777)"/>
<rect x="1481.5836192341333" y="695.8798565683211" width="9.638898061419626" height="8.675485709962542" fill="#e9eaee" transform="rotate(-25 1486.4030682648431 700.2175994233023)"/>
<rect x="1539.2514860597016" y="825.3236562744364" width="16.58306711654964" height="21.92676547474039" fill="#e9eaee" transform="rotate(-25 1547.5430196179764 836.2870390118067)"/>
<rect x="1548.8047746373245" y="850.8372532795962" width="24.108001874962497" height="19.983858491752706" fill="#e9eaee" transform="rotate(-25 1560.8587755748058 860.8291825254726)"/>
<rect x="1574.3693636468095" y="905.2846499064241" width="24.38041348523293" height="15.139156408875298" fill="#e9eaee" transform="rotate(-25 1586.559570389426 912.8542281108618)"/>
<rect x="1592.4293023719088" y="928.9078020255947" width="14.71950239695787" height="22.470987952170784" fill="#e9eaee" transform="rotate(-25 1599.7890535703878 940.1432960016801)"/>
<rect x="1599.464526989716" y="960.994707463813" width="23.68382441397247" height="21.70244325916437" fill="#e9eaee" transform="rotate(-25 1611.3064391967023 971.8459290933952)"/>
<rect x="1416.1786043232944" y="480.8807824559598" width="16.680704987972998" height="23.302593798103842" fill="#e9eaee" transform="rotate(-25 1424.518956817281 492.5320793550117)"/>
<rect x="1457.665342263066" y="574.0938857980733" width="11.30070604900678" height="8.64631927140967" fill="#e9eaee" transform="rotate(-25 1463.3156952875693 578.4170454337782)"/>
<rect x="1462.9543166672747" y="599.4889343474816" width="19.511162727803274" height="14.9165367306833" fill="#e9eaee" transform="rotate(-25 1472.7098980311764 606.9472027128232)"/>
<rect x="1473.9569761349096" y="622.1106124046534" width="23.90645793171714" height="23.469134412148296" fill="#e9eaee" transform="rotate(-25 1485.9102051007683 633.8451796107275)"/>
<rect x="1490.472797778899" y="651.4329544162828" width="20.238206926961688" height="13.519421691103025" fill="#e9eaee" transform="rotate(-25 1500.5919012423797 658.1926652618342)"/>
<rect x="1488.8245925244291" y="648.8308486819568" width="13.311611951310642" height="11.055166438572284" fill="#e9eaee" transform="rotate(-25 1495.4803985000844 654.358431901243)"/>
<rect x="1503.26315852914" y="676.2072714447036" width="19.865073134062747" height="16.334299597319323" fill="#e9eaee" transform="rotate(-25 1513.1956950961712 684.3744212433633)"/>
<rect x="1510.6506600555651" y="703.9137353514777" width="20.098110838358117" height="16.662684454247056" fill="#e9eaee" transform="rotate(-25 1520.6997154747442 712.2450775786012)"/>
<rect x="1516.3831125018962" y="711.8165018957443" width="11.276936509274234" height="10.03022785978056" fill="#e9eaee" transform="rotate(-25 1522.0215807565332 716.8316158256346)"/>
<rect x="1527.1969566811129" y="730.2247802915618" width="17.646459935666293" height="16.591271030746277" fill="#e9eaee" transform="rotate(-25 1536.020186648946 738.520415806935)"/>
<rect x="1540.9205506292933" y="762.2926080725209" width="17.762655662592977" height="14.118070586281904" fill="#e9eaee" transform="rotate(-25 1549.8018784605897 769.3516433656619)"/>
<rect x="1548.9652751734877" y="786.3109961395578" width="22.809580867746924" height="18.308406244440334" fill="#e9eaee" transform="rotate(-25 1560.370065607361 795.465199261778)"/>
<rect x="1561.2579357491588" y="789.6355174594248" width="8.982936456872967" height="11.266647338699766" fill="#e9eaee" transform="rotate(-25 1565.7494039775954 795.2688411287747)"/>
<rect x="1563.7752881910742" y="808.9300816376374" width="19.95840461850646" height="20.60232311764812" fill="#e9eaee" transform="rotate(-25 1573.7544905003274 819.2312431964615)"/>
<rect x="1602.6714032490233" y="892.0170807585456" width="18.52141452111062" height="21.170321419267438" fill="#e9eaee" transform="rotate(-25 1611.9321105095787 902.6022414681793)"/>
<rect x="1620.788751349432" y="925.0558154020098" width="8.218299449940101" height="10.08712781670877" fill="#e9eaee" transform="rotate(-25 1624.897901074402 930.0993793103642)"/>
<rect x="1453.2973149886452" y="504.44287136126445" width="25.147280491187445" height="12.404838981067275" fill="#e9eaee" transform="rotate(-25 1465.8709552342389 510.6452908517981)"/>
<rect x="1469.743552996388" y="530.4628843666733" width="8.89638326287828" height="10.104451552379473" fill="#e9eaee" transform="rotate(-25 1474.1917446278271 535.515110142863)"/>
<rect x="1494.73849588257" y="580.4313324512559" width="14.131147522801111" height="16.229620135388465" fill="#e9eaee" transform="rotate(-25 1501.8040696439707 588.5461425189501)"/>
<rect x="1493.9895901769619" y="579.2260990950464" width="10.885725775501234" height="9.545734184854837" fill="#e9eaee" transform="rotate(-25 1499.4324530647125 583.9989661874738)"/>
<rect x="1505.9967739396593" y="612.4871456564395" width="20.436526598039862" height="13.01735984667764" fill="#e9eaee" transform="rotate(-25 1516.2150372386793 618.9958255797783)"/>
<rect x="1514.942050228299" y="609.335699373919" width="10.207542043086267" height="9.42168769292865" fill="#e9eaee" transform="rotate(-25 1520.045821249842 614.0465432203833)"/>
<rect x="1510.9279827917678" y="637.4057442555904" width="25.20160607759257" height="14.883101551823184" fill="#e9eaee" transform="rotate(-25 1523.5287858305642 644.847295031502)"/>
<rect x="1558.6178944747726" y="715.2962631050943" width="14.909714368898236" height="22.08285571658373" fill="#e9eaee" transform="rotate(-25 1566.0727516592217 726.3376909633862)"/>
<rect x="1593.1360059543383" y="799.2872206900811" width="17.985720622794027" height="15.224992630047891" fill="#e9eaee" transform="rotate(-25 1602.1288662657353 806.899717005105)"/>
<rect x="1605.6974956187312" y="828.1309895428734" width="15.64919044894523" height="15.354810353001286" fill="#e9eaee" transform="rotate(-25 1613.5220908432038 835.8083947193741)"/>
<rect x="1480.1794980443822" y="490.14802815207236" width="20.772002808525944" height="18.906295703415616" fill="#e9eaee" transform="rotate(-25 1490.5654994486451 499.60117600378015)"/>
<rect x="1482.9049074019301" y="493.9624768823424" width="12.720563208687576" height="11.365881398714425" fill="#e9eaee" transform="rotate(-25 1489.2651890062739 499.64541758169963)"/>
<rect x="1494.592964065761" y="519.0766632801297" width="16.12239003752057" height="16.18383187640351" fill="#e9eaee" transform="rotate(-25 1502.6541590845213 527.1685792183314)"/>
<rect x="1516.3920455000034" y="569.2711910889122" width="21.12571296925715" height="23.27620283036897" fill="#e9eaee" transform="rotate(-25 1526.954901984632 580.9092925040967)"/>
<rect x="1545.22759667885" y="625.5319095376849" width="15.200854350691161" height="20.748719989860184" fill="#e9eaee" transform="rotate(-25 1552.8280238541956 635.9062695326149)"/>
<rect x="1555.4311188332795" y="645.5796403810385" width="19.885411247508554" height="22.97606415595088" fill="#e9eaee" transform="rotate(-25 1565.3738244570338 657.0676724590139)"/>
<rect x="1558.6692149643372" y="649.9216074136309" width="11.753735398927528" height="10.712530339988046" fill="#e9eaee" transform="rotate(-25 1564.546082663801 655.2778725836249)"/>
<rect x="1570.0968346501124" y="679.8041540642628" width="14.488739139343494" height="15.839672759957846" fill="#e9eaee" transform="rotate(-25 1577.3412042197842 687.7239904442417)"/>
<rect x="1569.8415839789116" y="680.9076411520501" width="9.654710316397694" height="10.201031235465262" fill="#e9eaee" transform="rotate(-25 1574.6689391371103 686.0081567697828)"/>
<rect x="1605.460607966839" y="759.2151024749303" width="22.57531816679387" height="16.51496321845746" fill="#e9eaee" transform="rotate(-25 1616.7482670502359 767.472584084159)"/>
<rect x="1509.6550063173202" y="476.112450119261" width="15.11125219122035" height="22.43741655038761" fill="#e9eaee" transform="rotate(-25 1517.2106324129304 487.3311583944548)"/>
<rect x="1521.4675014261645" y="499.4641223078242" width="16.62829019919032" height="21.201796282320927" fill="#e9eaee" transform="rotate(-25 1529.7816465257597 510.0650204489847)"/>
<rect x="1538.2747700553732" y="535.1772952215081" width="10.720649456844157" height="8.773685828774946" fill="#e9eaee" transform="rotate(-25 1543.6350947837952 539.5641381358955)"/>
<rect x="1568.6364057321832" y="610.2528077059039" width="23.702255231035135" height="14.631796596370492" fill="#e9eaee" transform="rotate(-25 1580.4875333477007 617.5687060040892)"/>
<rect x="1575.0218948175516" y="613.7875110607413" width="12.939962478192712" height="12.285329961453426" fill="#e9eaee" transform="rotate(-25 1581.491876056648 619.930176041468)"/>
<rect x="1593.718604518068" y="664.8845360708688" width="20.909631170529245" height="20.241845080641724" fill="#e9eaee" transform="rotate(-25 1604.1734201033328 675.0054586111896)"/>
<rect x="1612.315204701327" y="694.1878465768334" width="8.170344332852913" height="11.035637545508987" fill="#e9eaee" transform="rotate(-25 1616.4003768677535 699.7056653495879)"/>
<rect x="1585.5413184440772" y="567.561337623482" width="15.250923029182195" height="22.85592079070198" fill="#e9eaee" transform="rotate(-25 1593.1667799586683 578.989298018833)"/>
<rect x="1598.3711957291366" y="596.0609766790758" width="21.243325939365388" height="16.441594508324712" fill="#e9eaee" transform="rotate(-25 1608.9928586988194 604.2817739332381)"/>
<rect x="1604.1724534681061" y="534.9186099911931" width="8.369500543607172" height="10.161034320188397" fill="#e9eaee" transform="rotate(-25 1608.3572037399097 539.9991271512873)"/>
<rect x="1614.489204511781" y="558.8198346511282" width="14.675357759449287" height="20.360854181474952" fill="#e9eaee" transform="rotate(-25 1621.8268833915056 569.0002617418656)"/>
<rect x="1609.8282550236647" y="558.0156131334669" width="13.69911894952854" height="11.01768984271962" fill="#e9eaee" transform="rotate(-25 1616.677814498429 563.5244580548267)"/>
<rect x="1615.9714593490373" y="492.92810310659905" width="15.773777640018459" height="16.915199026652218" fill="#e9eaee" transform="rotate(-25 1623.8583481690466 501.38570261992515)"/>
<rect x="1617.7518226421598" y="491.8042828721221" width="12.349833799661312" height="13.143951424240104" fill="#e9eaee" transform="rotate(-25 1623.9267395419904 498.3762585842421)"/>
<polygon points="977,613 1066,560 1247,960 1180,960 1172,938 1084,796 1078,699" fill="#f7f7f7" />
<polygon points="800,672 935,672 915,728 861,746 815,740 800,700" fill="#f7f7f7" />
<polygon points="705,960 674,870 732,746 790,735 861,746 915,728 935,680 977,673 977,613 1078,699 1084,796 1172,938 1180,960" fill="#f3f0e4" />
<polygon points="738,507 778,507 802,567 760,567" fill="#f5f2e6" />
<polygon points="1322,507 1605,507 1605,960 1205,960 1200,870 1352,586" fill="#f3f0e4" />
<polygon points="1481,556 1497,549 1521,596 1505,603" fill="#e8ebef" />
<polygon points="1500,555 1510,551 1523,580 1513,584" fill="#e8ebef" />
<polygon points="1170,860 1190,870 1182,893 1160,888" fill="#f9f2e0" stroke="#f0dfc0" stroke-width="0.8"/>
<polyline points="329,507 433,728" fill="none" stroke="#d9e0e8" stroke-width="11" stroke-linecap="butt" stroke-linejoin="round" />
<polyline points="336,777 414,960" fill="none" stroke="#d9e0e8" stroke-width="11" stroke-linecap="butt" stroke-linejoin="round" />
<polyline points="457,507 512,615" fill="none" stroke="#d9e0e8" stroke-width="11" stroke-linecap="butt" stroke-linejoin="round" />
<polyline points="476,712 544,846" fill="none" stroke="#d9e0e8" stroke-width="11" stroke-linecap="butt" stroke-linejoin="round" />
<polyline points="521,868 564,960" fill="none" stroke="#d9e0e8" stroke-width="11" stroke-linecap="butt" stroke-linejoin="round" />
<polyline points="542,507 671,790" fill="none" stroke="#d9e0e8" stroke-width="11" stroke-linecap="butt" stroke-linejoin="round" />
<polyline points="642,809 705,960" fill="none" stroke="#d9e0e8" stroke-width="11" stroke-linecap="butt" stroke-linejoin="round" />
<polyline points="340,582 525,500" fill="none" stroke="#d9e0e8" stroke-width="11" stroke-linecap="butt" stroke-linejoin="round" />
<polyline points="340,661 400,635" fill="none" stroke="#d9e0e8" stroke-width="11" stroke-linecap="butt" stroke-linejoin="round" />
<polyline points="400,662 575,582" fill="none" stroke="#d9e0e8" stroke-width="11" stroke-linecap="butt" stroke-linejoin="round" />
<polyline points="340,773 665,630" fill="none" stroke="#d9e0e8" stroke-width="11" stroke-linecap="butt" stroke-linejoin="round" />
<polyline points="400,918 790,737" fill="none" stroke="#d9e0e8" stroke-width="11" stroke-linecap="butt" stroke-linejoin="round" />
<polyline points="340,897 404,869" fill="none" stroke="#d9e0e8" stroke-width="11" stroke-linecap="butt" stroke-linejoin="round" />
<polyline points="965,606 1138,527" fill="none" stroke="#d9e0e8" stroke-width="11" stroke-linecap="butt" stroke-linejoin="round" />
<polyline points="1064,507 1102,620 1133,699 1184,798 1246,960" fill="none" stroke="#d9e0e8" stroke-width="11" stroke-linecap="butt" stroke-linejoin="round" />
<polyline points="1125,507 1205,665" fill="none" stroke="#d9e0e8" stroke-width="11" stroke-linecap="butt" stroke-linejoin="round" />
<polyline points="1280,507 1322,606" fill="none" stroke="#d9e0e8" stroke-width="11" stroke-linecap="butt" stroke-linejoin="round" />
<polyline points="1167,579 1284,531" fill="none" stroke="#d9e0e8" stroke-width="11" stroke-linecap="butt" stroke-linejoin="round" />
<polyline points="1133,702 1394,581 1528,521 1605,493" fill="none" stroke="#d9e0e8" stroke-width="11" stroke-linecap="butt" stroke-linejoin="round" />
<polyline points="1181,795 1414,685" fill="none" stroke="#d9e0e8" stroke-width="11" stroke-linecap="butt" stroke-linejoin="round" />
<polyline points="1352,507 1394,586 1412,650 1416,680 1426,700 1459,771" fill="none" stroke="#d9e0e8" stroke-width="7" stroke-linecap="round" stroke-linejoin="round" />
<polyline points="1380,713 1445,843" fill="none" stroke="#d9e0e8" stroke-width="6" stroke-linecap="round" stroke-linejoin="round" />
<polyline points="1274,644 1315,733" fill="none" stroke="#d9e0e8" stroke-width="6" stroke-linecap="butt" stroke-linejoin="round" />
<polyline points="1416,672 1468,656 1478,670" fill="none" stroke="#d9e0e8" stroke-width="5" stroke-linecap="round" stroke-linejoin="round" />
<polyline points="1430,712 1468,700" fill="none" stroke="#d9e0e8" stroke-width="5" stroke-linecap="round" stroke-linejoin="round" />
<polyline points="1445,507 1462,541" fill="none" stroke="#d9e0e8" stroke-width="6" stroke-linecap="butt" stroke-linejoin="round" />
<polyline points="1519,505 1530,522" fill="none" stroke="#d9e0e8" stroke-width="6" stroke-linecap="butt" stroke-linejoin="round" />
<polyline points="1462,541 1528,521" fill="none" stroke="#d9e0e8" stroke-width="6" stroke-linecap="butt" stroke-linejoin="round" />
<polyline points="503,703 516,735" fill="none" stroke="#d9e0e8" stroke-width="5" stroke-linecap="butt" stroke-linejoin="round" />
<polyline points="631,575 703,737" fill="none" stroke="#d9e0e8" stroke-width="7" stroke-linecap="round" stroke-linejoin="round" />
<polyline points="611,600 636,589" fill="none" stroke="#d9e0e8" stroke-width="6" stroke-linecap="round" stroke-linejoin="round" />
<polyline points="574,840 601,894" fill="none" stroke="#d9e0e8" stroke-width="6" stroke-linecap="round" stroke-linejoin="round" />
<polyline points="1112,651 1177,624" fill="none" stroke="#d9e0e8" stroke-width="6" stroke-linecap="butt" stroke-linejoin="round" />
<path d="M1160 835 C1185 852 1205 880 1216 906 C1222 922 1226 940 1228 960" fill="none" stroke="#d9e0e8" stroke-width="6" />
<polyline points="703,507 806,728 881,886 910,958" fill="none" stroke="#cbd4de" stroke-width="40" stroke-linecap="butt" stroke-linejoin="round" />
<polyline points="703,507 806,728 881,886 910,958" fill="none" stroke="#d9e0e8" stroke-width="38" stroke-linecap="butt" stroke-linejoin="round" />
<polyline points="701,507 760,636" fill="none" stroke="#f2f4f7" stroke-width="4" stroke-linecap="butt" stroke-linejoin="round" />
<polyline points="760,636 806,728 881,886 910,958" fill="none" stroke="#edf1f5" stroke-width="1.4" stroke-linecap="butt" stroke-linejoin="round" />
<polyline points="855,782 864,790 887,836 917,897 940,935 953,958" fill="none" stroke="#cbd4de" stroke-width="13" stroke-linecap="butt" stroke-linejoin="round" />
<polyline points="855,782 864,790 887,836 917,897 940,935 953,958" fill="none" stroke="#d9e0e8" stroke-width="12" stroke-linecap="butt" stroke-linejoin="round" />
<polyline points="808,688 879,670" fill="none" stroke="#d9e0e8" stroke-width="8" stroke-linecap="butt" stroke-linejoin="round" />
<polyline points="845,770 915,735 929,741 943,790 958,818 966,840 963,870 980,912 1000,952" fill="none" stroke="#d9e0e8" stroke-width="9" stroke-linecap="butt" stroke-linejoin="round" />
<polyline points="873,797 931,771" fill="none" stroke="#e9eef3" stroke-width="3.5" stroke-linecap="butt" stroke-linejoin="round" />
<polyline points="893,842 951,813" fill="none" stroke="#e9eef3" stroke-width="3.5" stroke-linecap="butt" stroke-linejoin="round" />
<polyline points="908,874 949,858" fill="none" stroke="#e9eef3" stroke-width="3.5" stroke-linecap="butt" stroke-linejoin="round" />
<polyline points="922,903 952,890" fill="none" stroke="#e9eef3" stroke-width="3.5" stroke-linecap="butt" stroke-linejoin="round" />
<polyline points="928,935 1000,912" fill="none" stroke="#d9e0e8" stroke-width="7" stroke-linecap="butt" stroke-linejoin="round" />
<polyline points="935,960 975,938 1010,950" fill="none" stroke="#d9e0e8" stroke-width="7" stroke-linecap="butt" stroke-linejoin="round" />
<path d="M1607 500 C1607 545 1598 575 1582 598 C1560 627 1548 660 1549 700 C1550 730 1560 760 1559 785 C1558 805 1545 822 1512 836" fill="none" stroke="#a9b9cc" stroke-width="14" stroke-linecap="round"/>
<path d="M1607 500 C1607 545 1598 575 1582 598 C1560 627 1548 660 1549 700 C1550 730 1560 760 1559 785 C1558 805 1545 822 1512 836" fill="none" stroke="#d5dde7" stroke-width="12" stroke-linecap="round"/>
<path d="M1610 626 C1580 630 1562 655 1561 695 C1560 740 1572 775 1610 800" fill="none" stroke="#8aa5c5" stroke-width="12" />
<polygon points="1297,960 1347,922 1411,891 1452,868 1507,857 1605,813 1605,853 1577,874 1545,896 1445,944 1418,960" fill="#8aa5c5" />
<polyline points="1605,847 1520,882 1380,940 1340,960" fill="none" stroke="#eee9dc" stroke-width="4" stroke-linecap="butt" stroke-linejoin="round" />
<polyline points="1242,952 1380,891 1520,832" fill="none" stroke="#a9b9cc" stroke-width="16" stroke-linecap="butt" stroke-linejoin="round" />
<polyline points="1242,952 1380,891 1520,832" fill="none" stroke="#d5dde7" stroke-width="15" stroke-linecap="butt" stroke-linejoin="round" />
<polyline points="1420,963 1545,904 1605,885" fill="none" stroke="#d8e0ea" stroke-width="16" stroke-linecap="butt" stroke-linejoin="round" />
<polyline points="1452,885 1472,877" fill="none" stroke="#6f88a8" stroke-width="1.2" stroke-linecap="butt" stroke-linejoin="round" />
<g transform="translate(1421 879) rotate(-25)" opacity="0.8"><path d="M-4 0H4M-1 -3L-4 0L-1 3" stroke="#8e9aa8" stroke-width="1.6" fill="none"/></g>
<g transform="translate(1500 840) rotate(-25)" opacity="0.8"><path d="M-4 0H4M-1 -3L-4 0L-1 3" stroke="#8e9aa8" stroke-width="1.6" fill="none"/></g>
<g transform="translate(1541 819) rotate(-40)" opacity="0.8"><path d="M-4 0H4M-1 -3L-4 0L-1 3" stroke="#8e9aa8" stroke-width="1.6" fill="none"/></g>
<g transform="translate(1434 886) rotate(-25)" opacity="0.8"><path d="M-4 0H4M-1 -3L-4 0L-1 3" stroke="#5f7591" stroke-width="1.6" fill="none"/></g>
<g transform="translate(1596 826) rotate(-25)" opacity="0.8"><path d="M-4 0H4M-1 -3L-4 0L-1 3" stroke="#5f7591" stroke-width="1.6" fill="none"/></g>
<g transform="translate(1521 884) rotate(155)" opacity="0.8"><path d="M-4 0H4M-1 -3L-4 0L-1 3" stroke="#5f7591" stroke-width="1.6" fill="none"/></g>
<g transform="translate(1572 875) rotate(135)" opacity="0.8"><path d="M-4 0H4M-1 -3L-4 0L-1 3" stroke="#5f7591" stroke-width="1.6" fill="none"/></g>
<g transform="translate(1549 667) rotate(-90)" opacity="0.8"><path d="M-4 0H4M-1 -3L-4 0L-1 3" stroke="#8e9aa8" stroke-width="1.6" fill="none"/></g>
<g transform="translate(1565 731) rotate(90)" opacity="0.8"><path d="M-4 0H4M-1 -3L-4 0L-1 3" stroke="#5f7591" stroke-width="1.6" fill="none"/></g></svg>
<!--/MAPSVG-->
<!--MAPOVL-->
<svg width="1265" height="450" viewBox="340 508 1265 450" style="position:absolute;left:0;top:0"><defs><filter id="mshadow" x="-50%" y="-50%" width="200%" height="200%"><feDropShadow dx="0" dy="0.8" stdDeviation="0.8" flood-color="#000" flood-opacity="0.3"/></filter><filter id="pshadow" x="-20%" y="-20%" width="140%" height="160%"><feDropShadow dx="0" dy="2" stdDeviation="3.5" flood-color="#000" flood-opacity="0.3"/></filter></defs><text x="352" y="556" font-family="Liberation Sans" font-size="12.5" fill="#485568" font-weight="bold" text-anchor="middle" stroke="#fff" stroke-width="2.6" stroke-linejoin="round" paint-order="stroke" transform="rotate(64 352 556)" >Al Ghabra</text>
<text x="602" y="643" font-family="Liberation Sans" font-size="12.5" fill="#485568" font-weight="bold" text-anchor="middle" stroke="#fff" stroke-width="2.6" stroke-linejoin="round" paint-order="stroke" transform="rotate(66 602 643)" >Foursan</text>
<text x="528" y="821" font-family="Liberation Sans" font-size="12.5" fill="#485568" font-weight="bold" text-anchor="middle" stroke="#fff" stroke-width="2.6" stroke-linejoin="round" paint-order="stroke" transform="rotate(66 528 821)" >Fazzarah</text>
<text x="382" y="892" font-family="Liberation Sans" font-size="12.5" fill="#485568" font-weight="bold" text-anchor="middle" stroke="#fff" stroke-width="2.6" stroke-linejoin="round" paint-order="stroke" transform="rotate(63 382 892)" >Ahmad Al Qurash</text>
<text x="466" y="887" font-family="Liberation Sans" font-size="12.5" fill="#485568" font-weight="bold" text-anchor="middle" stroke="#fff" stroke-width="2.6" stroke-linejoin="round" paint-order="stroke" transform="rotate(-26 466 887)" >Rubayah Ara Raqqi</text>
<text x="728" y="767" font-family="Liberation Sans" font-size="12.5" fill="#485568" font-weight="bold" text-anchor="middle" stroke="#fff" stroke-width="2.6" stroke-linejoin="round" paint-order="stroke" transform="rotate(-25.6 728 767)" >Rubayah Ara Raqqi</text>
<text x="718" y="580" font-family="Liberation Sans" font-size="12.5" fill="#485568" font-weight="bold" text-anchor="middle" stroke="#fff" stroke-width="2.6" stroke-linejoin="round" paint-order="stroke" transform="rotate(67 718 580)" >Prince Turki</text>
<text x="773" y="697" font-family="Liberation Sans" font-size="12.5" fill="#485568" font-weight="bold" text-anchor="middle" stroke="#fff" stroke-width="2.6" stroke-linejoin="round" paint-order="stroke" transform="rotate(64 773 697)" >King Abdulaziz Al Awwal Rd</text>
<text x="797" y="694" font-family="Liberation Sans" font-size="12.5" fill="#485568" font-weight="normal" text-anchor="middle" stroke="#fff" stroke-width="2.6" stroke-linejoin="round" paint-order="stroke" transform="rotate(64 797 694)" >طريق الامير محمد بن عبدالعزيز</text>
<text x="1038" y="583" font-family="Liberation Sans" font-size="12.5" fill="#485568" font-weight="bold" text-anchor="middle" stroke="#fff" stroke-width="2.6" stroke-linejoin="round" paint-order="stroke" transform="rotate(-26.5 1038 583)" >Salih Al Hashimi</text>
<text x="1130" y="518" font-family="Liberation Sans" font-size="12.5" fill="#485568" font-weight="bold" text-anchor="middle" stroke="#fff" stroke-width="2.6" stroke-linejoin="round" paint-order="stroke" transform="rotate(66 1130 518)" >Al Hashimi</text>
<text x="1259" y="645" font-family="Liberation Sans" font-size="13" fill="#485568" font-weight="normal" text-anchor="middle" stroke="#fff" stroke-width="2.6" stroke-linejoin="round" paint-order="stroke" transform="rotate(-25 1259 645)" >افضل بن باد</text>
<text x="1433" y="566" font-family="Liberation Sans" font-size="13" fill="#485568" font-weight="normal" text-anchor="middle" stroke="#fff" stroke-width="2.6" stroke-linejoin="round" paint-order="stroke" transform="rotate(-25 1433 566)" >افضل بن باد</text>
<text x="507" y="616" font-family="Liberation Sans" font-size="13" fill="#485568" font-weight="normal" text-anchor="middle" stroke="#fff" stroke-width="2.6" stroke-linejoin="round" paint-order="stroke" transform="rotate(-25 507 616)" >فرده</text>
<text x="689" y="917" font-family="Liberation Sans" font-size="12" fill="#485568" font-weight="normal" text-anchor="middle" stroke="#fff" stroke-width="2.6" stroke-linejoin="round" paint-order="stroke" transform="rotate(66 689 917)" >فضه</text>
<text x="940" y="534" font-family="Liberation Sans" font-size="12" fill="#485568" font-weight="normal" text-anchor="middle" stroke="#fff" stroke-width="2.6" stroke-linejoin="round" paint-order="stroke" transform="rotate(66 940 534)" >محمد بن ال</text>
<text x="1060" y="518" font-family="Liberation Sans" font-size="12" fill="#485568" font-weight="normal" text-anchor="middle" stroke="#fff" stroke-width="2.6" stroke-linejoin="round" paint-order="stroke" transform="rotate(66 1060 518)" >محمد</text>
<text x="739" y="566" font-family="Liberation Sans" font-size="11" fill="#485568" font-weight="normal" text-anchor="middle" stroke="#fff" stroke-width="2.6" stroke-linejoin="round" paint-order="stroke" transform="rotate(66 739 566)" >زير</text>
<text x="1476" y="941" font-family="Liberation Sans" font-size="12.5" fill="#485568" font-weight="bold" text-anchor="middle" stroke="#fff" stroke-width="2.6" stroke-linejoin="round" paint-order="stroke" transform="rotate(-25.5 1476 941)" >Northern Ring Br Rd</text>
<text x="535" y="525" font-family="Liberation Sans" font-size="14" fill="#5d6d7e" font-weight="normal" text-anchor="start" stroke="#fff" stroke-width="2.6" stroke-linejoin="round" paint-order="stroke"  >Prince Mohammed</text>
<text x="535" y="539" font-family="Liberation Sans" font-size="14" fill="#5d6d7e" font-weight="normal" text-anchor="start" stroke="#fff" stroke-width="2.6" stroke-linejoin="round" paint-order="stroke"  >bin Saad Mosque</text>
<text x="661" y="551" font-family="Liberation Sans" font-size="11.5" fill="#5d6d7e" font-weight="normal" text-anchor="end" stroke="#fff" stroke-width="2.6" stroke-linejoin="round" paint-order="stroke"  >مسجد الأمير محمد بن سعد</text>
<text x="489" y="675" font-family="Liberation Sans" font-size="13" fill="#5d6d7e" font-weight="normal" text-anchor="end" stroke="#fff" stroke-width="2.6" stroke-linejoin="round" paint-order="stroke"  >5 رؤيا</text>
<text x="457" y="744" font-family="Liberation Sans" font-size="14" fill="#5d6d7e" font-weight="normal" text-anchor="start" stroke="#fff" stroke-width="2.6" stroke-linejoin="round" paint-order="stroke"  >Mosque</text>
<text x="506" y="755" font-family="Liberation Sans" font-size="11.5" fill="#5d6d7e" font-weight="normal" text-anchor="end" stroke="#fff" stroke-width="2.6" stroke-linejoin="round" paint-order="stroke"  >مسجد</text>
<text x="395" y="815" font-family="Liberation Sans" font-size="13" fill="#5d6d7e" font-weight="normal" text-anchor="end" stroke="#fff" stroke-width="2.6" stroke-linejoin="round" paint-order="stroke"  >والدة رشيد</text>
<text x="390" y="829" font-family="Liberation Sans" font-size="13" fill="#5d6d7e" font-weight="normal" text-anchor="end" stroke="#fff" stroke-width="2.6" stroke-linejoin="round" paint-order="stroke"  >الرشيد (ر</text>
<text x="739" y="526" font-family="Liberation Sans" font-size="14" fill="#1a73e8" font-weight="normal" text-anchor="start" stroke="#fff" stroke-width="2.6" stroke-linejoin="round" paint-order="stroke"  >Match perfumes</text>
<text x="770" y="539" font-family="Liberation Sans" font-size="11.5" fill="#1a73e8" font-weight="normal" text-anchor="end" stroke="#fff" stroke-width="2.6" stroke-linejoin="round" paint-order="stroke"  >ماتش</text>
<text x="873" y="704" font-family="Liberation Sans" font-size="14.5" fill="#1a73e8" font-weight="normal" text-anchor="start" stroke="#fff" stroke-width="2.6" stroke-linejoin="round" paint-order="stroke"  >centrepoint</text>
<text x="921" y="717" font-family="Liberation Sans" font-size="11.5" fill="#1a73e8" font-weight="normal" text-anchor="end" stroke="#fff" stroke-width="2.6" stroke-linejoin="round" paint-order="stroke"  >سنتربوينت</text>
<text x="1016" y="643" font-family="Liberation Sans" font-size="14" fill="#1a73e8" font-weight="normal" text-anchor="start" stroke="#fff" stroke-width="2.6" stroke-linejoin="round" paint-order="stroke"  >Carrefour Riyadh Park</text>
<text x="1099" y="656" font-family="Liberation Sans" font-size="11.5" fill="#1a73e8" font-weight="normal" text-anchor="end" stroke="#fff" stroke-width="2.6" stroke-linejoin="round" paint-order="stroke"  >كارفور هايبر ماركت</text>
<text x="1043" y="699" font-family="Liberation Sans" font-size="11" fill="#e37400" font-weight="normal" text-anchor="end" stroke="#fff" stroke-width="2.6" stroke-linejoin="round" paint-order="stroke"  >بوبا بوب</text>
<text x="1043" y="709" font-family="Liberation Sans" font-size="11.5" fill="#e37400" font-weight="normal" text-anchor="end" stroke="#fff" stroke-width="2.6" stroke-linejoin="round" paint-order="stroke"  >Bubble Tea</text>
<text x="844" y="827" font-family="Liberation Sans" font-size="14" fill="#e37400" font-weight="normal" text-anchor="end" stroke="#fff" stroke-width="2.6" stroke-linejoin="round" paint-order="stroke"  >صانع المزاج</text>
<text x="1005" y="783" font-family="Liberation Sans" font-size="14.5" fill="#1a73e8" font-weight="normal" text-anchor="start" stroke="#fff" stroke-width="2.6" stroke-linejoin="round" paint-order="stroke"  >Riyadh Park</text>
<text x="1055" y="797" font-family="Liberation Sans" font-size="11.5" fill="#1a73e8" font-weight="normal" text-anchor="end" stroke="#fff" stroke-width="2.6" stroke-linejoin="round" paint-order="stroke"  >الرياض بارك</text>
<text x="953" y="825" font-family="Liberation Sans" font-size="14" fill="#1a73e8" font-weight="normal" text-anchor="end" stroke="#fff" stroke-width="2.6" stroke-linejoin="round" paint-order="stroke"  >موقف سيارات</text>
<text x="953" y="836" font-family="Liberation Sans" font-size="11" fill="#1a73e8" font-weight="normal" text-anchor="end" stroke="#fff" stroke-width="2.6" stroke-linejoin="round" paint-order="stroke"  >Car Park</text>
<text x="953" y="888" font-family="Liberation Sans" font-size="13.8" fill="#e37400" font-weight="normal" text-anchor="start" stroke="#fff" stroke-width="2.6" stroke-linejoin="round" paint-order="stroke"  >Kumar Restaurant Riyadh</text>
<text x="1005" y="900" font-family="Liberation Sans" font-size="11.5" fill="#e37400" font-weight="normal" text-anchor="end" stroke="#fff" stroke-width="2.6" stroke-linejoin="round" paint-order="stroke"  >مطعم كومار</text>
<text x="953" y="910" font-family="Liberation Sans" font-size="12.5" fill="#e37400" font-weight="normal" text-anchor="start" stroke="#fff" stroke-width="2.6" stroke-linejoin="round" paint-order="stroke"  >Indian</text>
<text x="1152" y="849" font-family="Liberation Sans" font-size="13.9" fill="#e37400" font-weight="normal" text-anchor="end" stroke="#fff" stroke-width="2.6" stroke-linejoin="round" paint-order="stroke"  >The Cheesecake Factory</text>
<text x="1151" y="861" font-family="Liberation Sans" font-size="11.5" fill="#e37400" font-weight="normal" text-anchor="end" stroke="#fff" stroke-width="2.6" stroke-linejoin="round" paint-order="stroke"  >تشيز كيك فاكتوري</text>
<text x="1151" y="870" font-family="Liberation Sans" font-size="12" fill="#e37400" font-weight="normal" text-anchor="end" stroke="#fff" stroke-width="2.6" stroke-linejoin="round" paint-order="stroke"  >American</text>
<text x="1340" y="835" font-family="Liberation Sans" font-size="14" fill="#5d6d7e" font-weight="normal" text-anchor="end" stroke="#fff" stroke-width="2.6" stroke-linejoin="round" paint-order="stroke"  >لافينير</text>
<text x="1240" y="875" font-family="Liberation Sans" font-size="14" fill="#5d6d7e" font-weight="normal" text-anchor="start" stroke="#fff" stroke-width="2.6" stroke-linejoin="round" paint-order="stroke"  >Phi247, Hoarding 4</text>
<text x="1459" y="933" font-family="Liberation Sans" font-size="14" fill="#5d6d7e" font-weight="normal" text-anchor="end" stroke="#fff" stroke-width="2.6" stroke-linejoin="round" paint-order="stroke"  >سطحه النخيل</text>
<g filter="url(#mshadow)"><path d="M511.20000000000005 530 a11.5 11.5 0 1 1 23 0 c0 4 -3 6.5 -11.5 16 c-8.5 -9.5 -11.5 -6 -11.5 -16z" fill="#fff"/></g>
<circle cx="522.7" cy="530" r="10" fill="#7b8c9c"/>
<path d="M517.1 534.5v-6.5l0.7-1.2 0.7 1.2v6.5zM526.9000000000001 534.5v-6.5l0.7-1.2 0.7 1.2v6.5zM519.5 534.5v-4.5a3.2 3.2 0 0 1 6.4 0v4.5z" fill="#fff"/><path d="M521.6 534.5v-2.6a1.1 1.1 0 0 1 2.2 0v2.6z" fill="#7b8c9c"/>
<g filter="url(#mshadow)"><path d="M474.5 642.5 a11.5 11.5 0 1 1 23 0 c0 4 -3 6.5 -11.5 16 c-8.5 -9.5 -11.5 -6 -11.5 -16z" fill="#fff"/></g>
<circle cx="486" cy="642.5" r="10" fill="#7b8c9c"/>
<circle cx="486" cy="642.5" r="3.6" fill="#fff"/>
<g filter="url(#mshadow)"><path d="M467.5 711 a11.5 11.5 0 1 1 23 0 c0 4 -3 6.5 -11.5 16 c-8.5 -9.5 -11.5 -6 -11.5 -16z" fill="#fff"/></g>
<circle cx="479" cy="711" r="10" fill="#7b8c9c"/>
<path d="M473.4 715.5v-6.5l0.7-1.2 0.7 1.2v6.5zM483.2 715.5v-6.5l0.7-1.2 0.7 1.2v6.5zM475.8 715.5v-4.5a3.2 3.2 0 0 1 6.4 0v4.5z" fill="#fff"/><path d="M477.9 715.5v-2.6a1.1 1.1 0 0 1 2.2 0v2.6z" fill="#7b8c9c"/>
<g filter="url(#mshadow)"><path d="M755.5 553 a11.5 11.5 0 1 1 23 0 c0 4 -3 6.5 -11.5 16 c-8.5 -9.5 -11.5 -6 -11.5 -16z" fill="#fff"/></g>
<circle cx="767" cy="553" r="10" fill="#1e90f0"/>
<path d="M762.5 551.5h9l-0.8 6.5h-7.4z" fill="#fff"/><path d="M764.8 551.5v-1.5a2.2 2.2 0 0 1 4.4 0v1.5" stroke="#fff" stroke-width="1.2" fill="none"/>
<g filter="url(#mshadow)"><path d="M984.5 655 a11.5 11.5 0 1 1 23 0 c0 4 -3 6.5 -11.5 16 c-8.5 -9.5 -11.5 -6 -11.5 -16z" fill="#fff"/></g>
<circle cx="996" cy="655" r="10" fill="#b36ce8"/>
<rect x="992" y="650" width="8" height="10" fill="#fff"/><path d="M993.8 651.5v7M998.2 651.5v7" stroke="#b36ce8" stroke-width="1.2"/>
<g filter="url(#mshadow)"><path d="M1032.5 612.5 a11.5 11.5 0 1 1 23 0 c0 4 -3 6.5 -11.5 16 c-8.5 -9.5 -11.5 -6 -11.5 -16z" fill="#fff"/></g>
<circle cx="1044" cy="612.5" r="10" fill="#1e90f0"/>
<path d="M1039 608.5h2l1.5 6h5.5l1.2-4.5h-7.2" stroke="#fff" stroke-width="1.5" fill="none"/><circle cx="1043" cy="616.7" r="1.1" fill="#fff"/><circle cx="1047.5" cy="616.7" r="1.1" fill="#fff"/>
<g filter="url(#mshadow)"><path d="M1046.0 696 a11.5 11.5 0 1 1 23 0 c0 4 -3 6.5 -11.5 16 c-8.5 -9.5 -11.5 -6 -11.5 -16z" fill="#fff"/></g>
<circle cx="1057.5" cy="696" r="10" fill="#f57c1f"/>
<path d="M1052.5 692.5h8v4a3 3 0 0 1 -3 3h-2a3 3 0 0 1 -3 -3z" fill="#fff"/><path d="M1060.5 693.5h1.2a1.5 1.5 0 0 1 0 3h-1.2" stroke="#fff" stroke-width="1.1" fill="none"/><rect x="1052.0" y="699.5" width="10" height="1.2" fill="#fff"/>
<g filter="url(#mshadow)"><path d="M804.1 794 a11.5 11.5 0 1 1 23 0 c0 4 -3 6.5 -11.5 16 c-8.5 -9.5 -11.5 -6 -11.5 -16z" fill="#fff"/></g>
<circle cx="815.6" cy="794" r="10" fill="#f57c1f"/>
<path d="M810.6 790.5h8v4a3 3 0 0 1 -3 3h-2a3 3 0 0 1 -3 -3z" fill="#fff"/><path d="M818.6 791.5h1.2a1.5 1.5 0 0 1 0 3h-1.2" stroke="#fff" stroke-width="1.1" fill="none"/><rect x="810.1" y="797.5" width="10" height="1.2" fill="#fff"/>
<g filter="url(#mshadow)"><path d="M978.5 781.6 a11.5 11.5 0 1 1 23 0 c0 4 -3 6.5 -11.5 16 c-8.5 -9.5 -11.5 -6 -11.5 -16z" fill="#fff"/></g>
<circle cx="990" cy="781.6" r="10" fill="#1e90f0"/>
<path d="M985.5 780.1h9l-0.8 6.5h-7.4z" fill="#fff"/><path d="M987.8 780.1v-1.5a2.2 2.2 0 0 1 4.4 0v1.5" stroke="#fff" stroke-width="1.2" fill="none"/>
<g filter="url(#mshadow)"><path d="M913.0 851.5 a11.5 11.5 0 1 1 23 0 c0 4 -3 6.5 -11.5 16 c-8.5 -9.5 -11.5 -6 -11.5 -16z" fill="#fff"/></g>
<circle cx="924.5" cy="851.5" r="10" fill="#b7c6f8"/>
<text x="924.5" y="856.5" font-family="Liberation Sans" font-size="14" font-weight="bold" fill="#3540d0" text-anchor="middle">P</text>
<g filter="url(#mshadow)"><path d="M969.1 856 a11.5 11.5 0 1 1 23 0 c0 4 -3 6.5 -11.5 16 c-8.5 -9.5 -11.5 -6 -11.5 -16z" fill="#fff"/></g>
<circle cx="980.6" cy="856" r="10" fill="#f57c1f"/>
<path d="M976.6 851v4a1.5 1.5 0 0 0 3 0v-4M978.1 855v6.5M983.1 861.5v-10.5c1.8 1 2.2 3.5 2 6h-2" stroke="#fff" stroke-width="1.4" fill="none"/>
<g filter="url(#mshadow)"><path d="M1112.3 817 a11.5 11.5 0 1 1 23 0 c0 4 -3 6.5 -11.5 16 c-8.5 -9.5 -11.5 -6 -11.5 -16z" fill="#fff"/></g>
<circle cx="1123.8" cy="817" r="10" fill="#f57c1f"/>
<path d="M1119.8 812v4a1.5 1.5 0 0 0 3 0v-4M1121.3 816v6.5M1126.3 822.5v-10.5c1.8 1 2.2 3.5 2 6h-2" stroke="#fff" stroke-width="1.4" fill="none"/>
<g filter="url(#mshadow)"><path d="M1278.5 826 a11.5 11.5 0 1 1 23 0 c0 4 -3 6.5 -11.5 16 c-8.5 -9.5 -11.5 -6 -11.5 -16z" fill="#fff"/></g>
<circle cx="1290" cy="826" r="10" fill="#7b8c9c"/>
<circle cx="1290" cy="826" r="3.6" fill="#fff"/>
<g filter="url(#mshadow)"><path d="M1318.5 891.7 a11.5 11.5 0 1 1 23 0 c0 4 -3 6.5 -11.5 16 c-8.5 -9.5 -11.5 -6 -11.5 -16z" fill="#fff"/></g>
<circle cx="1330" cy="891.7" r="10" fill="#7b8c9c"/>
<circle cx="1330" cy="891.7" r="3.6" fill="#fff"/>
<g filter="url(#mshadow)"><path d="M1393.5 901 a11.5 11.5 0 1 1 23 0 c0 4 -3 6.5 -11.5 16 c-8.5 -9.5 -11.5 -6 -11.5 -16z" fill="#fff"/></g>
<circle cx="1405" cy="901" r="10" fill="#7b8c9c"/>
<path d="M1399.5 899l5.5-3.5 5.5 3.5zM1400.5 899.5h9v1h-9zM1401 901h1.5v3.5h-1.5zM1404.25 901h1.5v3.5h-1.5zM1407.5 901h1.5v3.5h-1.5zM1400 904.8h10v1.2h-10z" fill="#fff"/>
<g filter="url(#mshadow)"><path d="M845.5 706 a11.5 11.5 0 1 1 23 0 c0 4 -3 6.5 -11.5 16 c-8.5 -9.5 -11.5 -6 -11.5 -16z" fill="#fff"/></g>
<circle cx="857" cy="706" r="10" fill="#1e90f0"/>
<circle cx="857" cy="706" r="3.6" fill="#fff"/>
<path d="M857 717.5c-3-8-13-13.5-13-23a13 13 0 0 1 26 0c0 9.5-10 15-13 23z" fill="#ea4335" stroke="#b3261e" stroke-width="0.8"/>
<circle cx="857" cy="693.5" r="4.5" fill="#a50e0e"/>
<g filter="url(#pshadow)"><path d="M745 568h224a8 8 0 0 1 8 8v91a8 8 0 0 1 -8 8h-100l-12 12-12-12h-100a8 8 0 0 1 -8 -8v-91a8 8 0 0 1 8 -8z" fill="#fff"/></g>
<text x="749" y="597" font-family="Liberation Sans" font-size="14" fill="#3c4043" stroke="#3c4043" stroke-width="0.3">centrepoint</text>
<path d="M947 586.5l12.5 12.5M959.5 586.5l-12.5 12.5" stroke="#444" stroke-width="2"/>
<text x="925" y="629" font-family="Liberation Sans" font-size="11" fill="#222" direction="rtl" unicode-bidi="embed" text-anchor="start">صالح الهاشمي، العقيق، الرياض 13511،</text>
<text x="749" y="645" font-family="Liberation Sans" font-size="13" fill="#3c4043">Saudi Arabia</text>
<text x="749" y="660" font-family="Liberation Sans" font-size="13" fill="#1a73e8">View on Google Maps</text>
<g filter="url(#mshadow)"><rect x="350" y="518" width="168" height="40" rx="2" fill="#fff"/></g>
<rect x="419.5" y="518" width="1" height="40" fill="#e6e6e6"/>
<text x="367" y="545" font-family="Liberation Sans" font-size="18" fill="#000" stroke="#000" stroke-width="0.55">Map</text>
<text x="437" y="545" font-family="Liberation Sans" font-size="18" fill="#565656">Satellite</text>
<g filter="url(#mshadow)"><rect x="1555" y="518" width="40" height="40" rx="2" fill="#fff"/></g>
<path d="M1567 535.5V530.5H1572.5M1577.5 530.5H1583V535.5M1583 540.5V545.5H1577.5M1572.5 545.5H1567V540.5" stroke="#555" stroke-width="2.2" fill="none"/>
<g filter="url(#mshadow)"><circle cx="1575" cy="842" r="20" fill="#fff"/></g>
<path d="M1570.5 835L1575 830.5L1579.5 835M1570.5 848.5L1575 853L1579.5 848.5M1568 837.5L1563.5 842L1568 846.5M1581.5 837.5L1586 842L1581.5 846.5" stroke="#5f5f5f" stroke-width="2.4" fill="none"/>
<rect x="1545.5" y="839.5" width="12" height="11" fill="#fff" stroke="#555" stroke-width="0.8"/><text x="1549" y="848" font-family="Liberation Sans" font-size="8" fill="#444">8</text>
<g filter="url(#mshadow)"><rect x="1555" y="894" width="40" height="40" rx="2" fill="#fff"/></g>
<circle cx="1574.5" cy="904" r="5.2" fill="#fbbc04" stroke="#b07c00" stroke-width="0.4"/><path d="M1569 909.2 L1580 909.2 Q1582 909.4 1582.4 911.2 L1583.4 918.5 L1581.4 919 L1580.2 913.6 L1580.2 929 L1575.4 929 L1575.4 921 L1573.6 921 L1573.6 929 L1568.8 929 L1568.8 913.6 L1567.6 919 L1565.6 918.5 L1566.6 911.2 Q1567 909.4 1569 909.2 Z" fill="#fbbc04" stroke="#b07c00" stroke-width="0.4"/><path d="M1571 909.4 L1574.5 914.5 L1578 909.4 Z" fill="#e8710a"/>
<text x="350.5" y="949.5" font-family="Liberation Sans" font-size="17.5" stroke="#fff" stroke-width="2.5" paint-order="stroke" letter-spacing="-0.2"><tspan fill="#4285f4">G</tspan><tspan fill="#ea4335">o</tspan><tspan fill="#fbbc05">o</tspan><tspan fill="#4285f4">g</tspan><tspan fill="#34a853">l</tspan><tspan fill="#ea4335">e</tspan></text>
<rect x="1346" y="944" width="259" height="14" fill="#fff" fill-opacity="0.8"/>
<text x="1352" y="954" font-family="Liberation Sans" font-size="10" fill="#222">Keyboard shortcuts</text>
<text x="1450" y="954" font-family="Liberation Sans" font-size="10" fill="#222">Map data ©2025 Google</text>
<text x="1571" y="954" font-family="Liberation Sans" font-size="10" fill="#222">Terms</text></svg>
<!--/MAPOVL-->
</div>

<div class="lbl" style="left:340px;top:978px">Latitude</div>
<div class="lbl" style="left:985px;top:978px">Longitude</div>
<div class="inp" style="left:340px;top:1000px;width:620px">24.757402619681965</div>
<div class="inp" style="left:985px;top:1000px;width:620px">46.62796139717102</div>
<div class="lbl" style="left:340px;top:1050px">Location</div>
<div class="lbl" style="left:663px;top:1050px">Landmark</div>
<div class="inp" style="left:340px;top:1072px;width:298px"></div>
<div class="inp" style="left:663px;top:1072px;width:297px"></div>

<div class="abs" style="left:340px;top:1145px;width:1265px;height:1px;background:#e6e7eb"></div>

<div class="abs" style="left:340px;top:1158px;width:113px;height:42px;border:1.5px solid #2389ff;border-radius:4px;color:#2389ff;font-weight:bold;font-size:12.8px;text-align:center;line-height:39px">PREVIOUS</div>
<div class="abs" style="left:1507px;top:1158px;width:98px;height:42px;background:#2389ff;border-radius:4px;color:#fff;font-weight:bold;font-size:12.8px;text-align:center;line-height:42px">SUBMIT</div>
<div id="footer" class="abs" style="left:0;top:1262px;width:1920px;height:50px;background:#fff"></div>
<div class="abs" style="left:315px;top:1279px;font-size:13.4px;color:#3b3b40;line-height:16px;white-space:pre">2021©</div>
<div class="abs" style="left:365.5px;top:1279px;font-size:13.4px;color:#3b3b40;line-height:16px;white-space:pre">INWANI</div>
<div class="abs" style="left:1392px;top:1277px;font-size:13.4px;color:#4a4a50;line-height:16px;font-weight:bold">Powered by</div>
<div class="abs" style="left:1485px;top:1277px;font-size:13.8px;color:#6d7184;line-height:16px">ASA Technologies</div>
<div class="abs" style="left:1864px;top:1236px;width:36px;height:36px;background:#a9cdf9;border-radius:3px">
  <svg width="36" height="36" viewBox="0 0 36 36" style="position:absolute;left:0;top:0"><path d="M18 24V11.5M12 17.5l6-6 6 6" stroke="#fff" stroke-width="1.3" fill="none" stroke-opacity="0.75"/></svg></div>
<div class="abs" style="left:1840px;top:831px;width:60px;height:60px;border-radius:50%;background:#2389ff;box-shadow:0 0 22px 6px rgba(35,137,255,0.4)">
  <svg width="60" height="60" viewBox="0 0 60 60" style="position:absolute;left:0;top:0">
    <circle cx="30.1" cy="29.9" r="16" fill="#fff"/><path d="M16.2 35 L14.1 45.8 L23 43.5 Z" fill="#fff"/>
    <circle cx="23.3" cy="29.9" r="2" fill="#2389ff"/><circle cx="30.1" cy="29.9" r="2" fill="#2389ff"/><circle cx="37" cy="29.9" r="2" fill="#2389ff"/>
  </svg></div>
</body></html>
